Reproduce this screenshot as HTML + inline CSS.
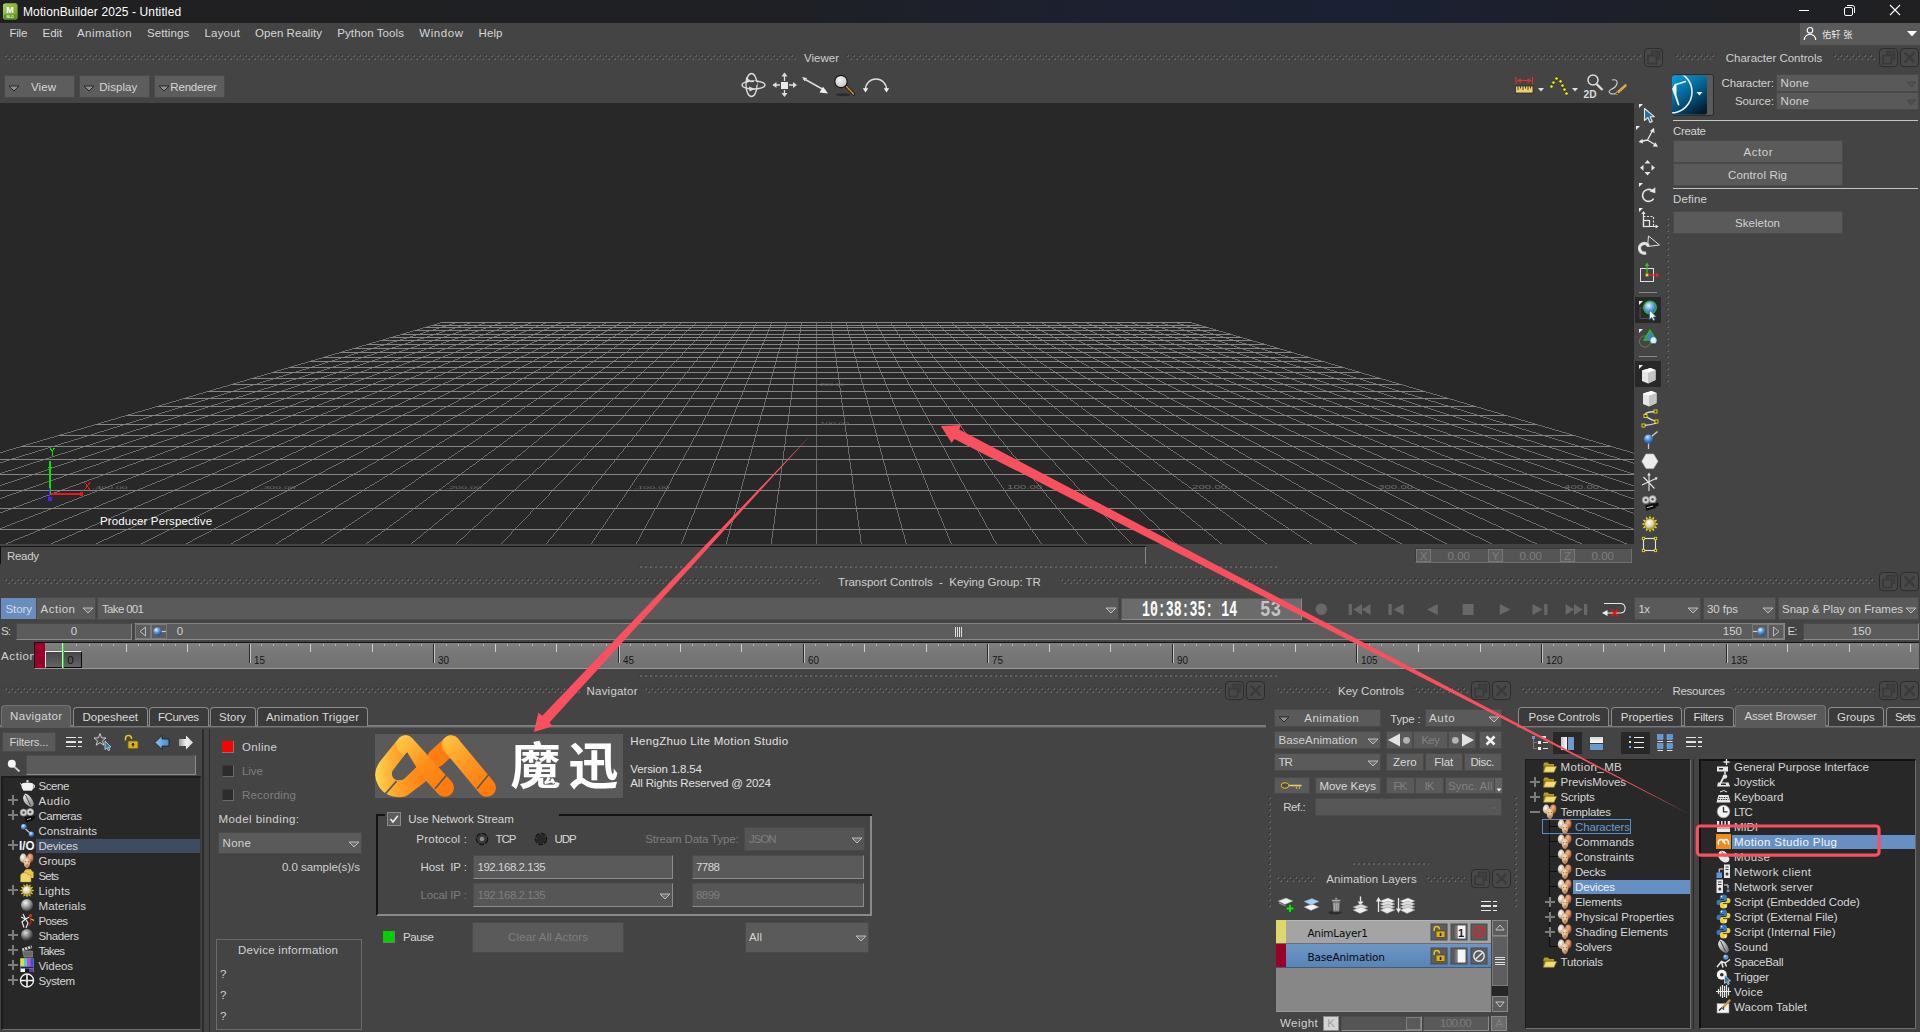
<!DOCTYPE html>
<html lang="en"><head><meta charset="utf-8"><title>MotionBuilder 2025 - Untitled</title>
<style>
html,body{margin:0;padding:0;background:#444;}
body{width:1920px;height:1032px;position:relative;overflow:hidden;font-family:"Liberation Sans","Noto Sans CJK SC",sans-serif;font-size:12px;color:#d2d2d2;}
#app{position:absolute;left:0;top:0;width:1920px;height:1032px;overflow:hidden;background:#444444;}
#app div,#app svg{position:absolute;box-sizing:border-box;}
#app svg{overflow:visible;}
.t{white-space:pre;}
.grip{height:6px;background-image:
 linear-gradient(90deg,transparent 2px,#646464 2px,#646464 3px,transparent 3px),
 linear-gradient(90deg,transparent 1px,#646464 1px,#646464 3px,transparent 3px),
 linear-gradient(90deg,#3a3a3a 2px,transparent 2px),
 linear-gradient(90deg,transparent 2px,#646464 2px,#646464 3px,transparent 3px),
 linear-gradient(90deg,transparent 1px,#646464 1px,#646464 3px,transparent 3px),
 linear-gradient(90deg,#3a3a3a 2px,transparent 2px);
 background-size:6px 1px,6px 1px,6px 2px,6px 1px,6px 1px,6px 2px;background-repeat:repeat-x;
 background-position:0 1px,0 2px,0 0,3px 4px,3px 5px,3px 3px;}
.vgrip{width:3px;background-image:
 linear-gradient(180deg,transparent 2px,#646464 2px,#646464 3px,transparent 3px),
 linear-gradient(180deg,transparent 1px,#646464 1px,#646464 3px,transparent 3px),
 linear-gradient(180deg,#3a3a3a 2px,transparent 2px);
 background-size:1px 6px,1px 6px,2px 6px;background-repeat:repeat-y;background-position:1px 0,2px 0,0 0;}
</style></head>
<body><div id="app">
<svg width="0" height="0" style="left:0;top:0;"><defs><radialGradient id="fcL" cx="0.4" cy="0.35" r="0.75"><stop offset="0" stop-color="#fffaf2"/><stop offset="0.55" stop-color="#d0c0b0"/><stop offset="1" stop-color="#7a6a5c"/></radialGradient><radialGradient id="fcR" cx="0.45" cy="0.35" r="0.75"><stop offset="0" stop-color="#f4b898"/><stop offset="0.55" stop-color="#c87850"/><stop offset="1" stop-color="#6a3420"/></radialGradient><radialGradient id="fcF" cx="0.42" cy="0.32" r="0.8"><stop offset="0" stop-color="#fbe6c8"/><stop offset="0.55" stop-color="#d8a878"/><stop offset="1" stop-color="#7a4c2c"/></radialGradient></defs></svg>
<div style="left:0px;top:0px;width:1920px;height:23px;background:linear-gradient(90deg,#202021 0%,#1f2024 38%,#1c2030 58%,#1b2032 72%,#1e2026 90%,#202022 100%);"></div>
<svg style="left:3px;top:3px;" width="15" height="17" viewBox="0 0 15 17"><defs><linearGradient id="gi" x1="0" y1="0" x2="1" y2="1"><stop offset="0" stop-color="#a9cf5a"/><stop offset="1" stop-color="#6f9a2e"/></linearGradient></defs><path d="M1 2 L3 0 L13 0 L15 2 L15 15 L13 17 L1 17 Z" fill="#4f7a25"/><rect x="0" y="0.5" width="14" height="15.5" rx="1.5" fill="url(#gi)"/><rect x="1" y="11.5" width="13" height="4.5" fill="#5f8f2a"/><text x="7" y="9.6" font-size="9" font-weight="bold" fill="#fff" text-anchor="middle" font-family="Liberation Sans,sans-serif">M</text><text x="7.2" y="15.3" font-size="3.6" font-weight="bold" fill="#e4f0c8" text-anchor="middle" font-family="Liberation Sans,sans-serif">BLD</text></svg>
<div class="t" style="top:2.00px;height:20px;line-height:20px;font-size:12px;color:#ffffff;left:23px;letter-spacing:0.12px;">MotionBuilder 2025 - Untitled</div>
<svg style="left:1790px;top:0px;" width="130" height="23" viewBox="0 0 130 23"><path d="M9 10.5 H19" stroke="#fff" stroke-width="1"/><rect x="54.5" y="7.5" width="8" height="8" rx="1.5" fill="none" stroke="#fff" stroke-width="1"/><path d="M57 5.5 H62.5 Q64.5 5.5 64.5 7.5 V13" fill="none" stroke="#fff" stroke-width="1"/><path d="M100 5 L110 15 M110 5 L100 15" stroke="#fff" stroke-width="1.1"/></svg>
<div style="left:0px;top:23px;width:1920px;height:22px;background:#444444;"></div>
<div class="t" style="top:23.00px;height:20px;line-height:20px;font-size:11.5px;color:#d6d6d6;left:9.5px;letter-spacing:-0.24px;">File</div>
<div class="t" style="top:23.00px;height:20px;line-height:20px;font-size:11.5px;color:#d6d6d6;left:42.6px;letter-spacing:-0.11px;">Edit</div>
<div class="t" style="top:23.00px;height:20px;line-height:20px;font-size:11.5px;color:#d6d6d6;left:77px;letter-spacing:0.45px;">Animation</div>
<div class="t" style="top:23.00px;height:20px;line-height:20px;font-size:11.5px;color:#d6d6d6;left:147px;letter-spacing:0.10px;">Settings</div>
<div class="t" style="top:23.00px;height:20px;line-height:20px;font-size:11.5px;color:#d6d6d6;left:204.5px;letter-spacing:0.19px;">Layout</div>
<div class="t" style="top:23.00px;height:20px;line-height:20px;font-size:11.5px;color:#d6d6d6;left:255px;letter-spacing:0.05px;">Open Reality</div>
<div class="t" style="top:23.00px;height:20px;line-height:20px;font-size:11.5px;color:#d6d6d6;left:337.25px;letter-spacing:0.10px;">Python Tools</div>
<div class="t" style="top:23.00px;height:20px;line-height:20px;font-size:11.5px;color:#d6d6d6;left:419.25px;letter-spacing:0.57px;">Window</div>
<div class="t" style="top:23.00px;height:20px;line-height:20px;font-size:11.5px;color:#d6d6d6;left:478.5px;letter-spacing:0.11px;">Help</div>
<div style="left:1800px;top:23px;width:120px;height:22px;background:#5a5a5a;"></div>
<svg style="left:1803px;top:26px;" width="14" height="16" viewBox="0 0 14 16"><circle cx="7" cy="4.3" r="2.8" fill="none" stroke="#fff" stroke-width="1.1"/><path d="M1.3 14 A5.7 5.7 0 0 1 12.7 14" fill="none" stroke="#fff" stroke-width="1.1"/></svg>
<div class="t" style="top:25.00px;height:20px;line-height:20px;font-size:9.3px;color:#e8e8e8;left:1822px;font-family:'Liberation Sans','Noto Sans CJK SC',sans-serif;">佑轩 张</div>
<svg style="left:1907px;top:31px;" width="10" height="6" viewBox="0 0 10 6"><path d="M0 0 H10 L5 5.5 Z" fill="#fff"/></svg>
<div class="grip" style="left:4px;top:54px;width:792px;"></div>
<div class="t" style="top:48.00px;height:20px;line-height:20px;font-size:11.5px;color:#d0d0d0;left:521.50px;width:600px;text-align:center;">Viewer</div>
<div class="grip" style="left:846px;top:54px;width:795px;"></div>
<svg style="left:1644px;top:47.5px;" width="19" height="19" viewBox="0 0 19 19"><rect x="0.5" y="0.5" width="18" height="18.2" rx="3.5" fill="#484848" stroke="#2c2c2c"/><rect x="8" y="3.5" width="7.5" height="7.5" fill="#404040" stroke="#3a3a3a" stroke-width="1.6"/><rect x="4" y="7.5" width="8.5" height="8" fill="#484848" stroke="#3a3a3a" stroke-width="2"/></svg>
<div class="grip" style="left:1675px;top:54px;width:40px;"></div>
<div class="t" style="top:48.00px;height:20px;line-height:20px;font-size:11.5px;color:#d0d0d0;left:1474.00px;width:600px;text-align:center;">Character Controls</div>
<div class="grip" style="left:1833px;top:54px;width:42px;"></div>
<svg style="left:1879px;top:47.5px;" width="19" height="19" viewBox="0 0 19 19"><rect x="0.5" y="0.5" width="18" height="18.2" rx="3.5" fill="#484848" stroke="#2c2c2c"/><rect x="8" y="3.5" width="7.5" height="7.5" fill="#404040" stroke="#3a3a3a" stroke-width="1.6"/><rect x="4" y="7.5" width="8.5" height="8" fill="#484848" stroke="#3a3a3a" stroke-width="2"/></svg>
<svg style="left:1900px;top:47.5px;" width="19" height="19" viewBox="0 0 19 19"><rect x="0.5" y="0.5" width="18" height="18.2" rx="3.5" fill="#484848" stroke="#2c2c2c"/><path d="M4.5 4.5 L14.5 14.5 M14.5 4.5 L4.5 14.5" stroke="#3a3a3a" stroke-width="2.4" fill="none"/></svg>
<div style="left:5px;top:76px;width:69px;height:21px;background:#5d5d5d;box-shadow:0 0 0 1px #4a4a4a;"></div>
<svg style="left:7.5px;top:84.5px;" width="12" height="7" viewBox="0 0 12 7"><path d="M1 1 L11 1 L6.0 6 Z" fill="#8e8e8e" stroke="#1e1e1e" stroke-width="0.9" stroke-linejoin="miter"/></svg>
<div class="t" style="top:77.00px;height:20px;line-height:20px;font-size:11.5px;color:#d6d6d6;left:-256.45px;width:600px;text-align:center;letter-spacing:0.09px;">View</div>
<div style="left:80px;top:76px;width:69px;height:21px;background:#5d5d5d;box-shadow:0 0 0 1px #4a4a4a;"></div>
<svg style="left:82.5px;top:84.5px;" width="12" height="7" viewBox="0 0 12 7"><path d="M1 1 L11 1 L6.0 6 Z" fill="#8e8e8e" stroke="#1e1e1e" stroke-width="0.9" stroke-linejoin="miter"/></svg>
<div class="t" style="top:77.00px;height:20px;line-height:20px;font-size:11.5px;color:#d6d6d6;left:-181.78px;width:600px;text-align:center;letter-spacing:0.05px;">Display</div>
<div style="left:155px;top:76px;width:69px;height:21px;background:#5d5d5d;box-shadow:0 0 0 1px #4a4a4a;"></div>
<svg style="left:157.5px;top:84.5px;" width="12" height="7" viewBox="0 0 12 7"><path d="M1 1 L11 1 L6.0 6 Z" fill="#8e8e8e" stroke="#1e1e1e" stroke-width="0.9" stroke-linejoin="miter"/></svg>
<div class="t" style="top:77.00px;height:20px;line-height:20px;font-size:11.5px;color:#d6d6d6;left:-106.50px;width:600px;text-align:center;letter-spacing:-0.21px;">Renderer</div>
<svg style="left:741px;top:72px;" width="26" height="26" viewBox="0 0 26 26"><ellipse cx="12.5" cy="13" rx="11.5" ry="4" fill="none" stroke="#dcdcdc" stroke-width="1.3"/><ellipse cx="10.5" cy="13" rx="5.5" ry="11.5" fill="none" stroke="#dcdcdc" stroke-width="1.3"/><path d="M4.5 11.5 L5 5 L9.5 8.5 Z" fill="#dcdcdc"/><path d="M8 14.5 L14 17 L8.5 19.5 Z" fill="#dcdcdc"/><path d="M9 9.5 H14" stroke="#dcdcdc" stroke-width="1.2"/><path d="M13 9.5 A4 3 0 0 1 15 13" stroke="#444" stroke-width="2" fill="none"/></svg>
<svg style="left:772px;top:72px;" width="26" height="26" viewBox="0 0 26 26"><path d="M12.5 1 V24 M1 13 H24" stroke="#dcdcdc" stroke-width="1.3"/><path d="M12.5 0.5 L15.5 4.5 H9.5 Z M12.5 25 L15.5 21 H9.5 Z M0.5 13 L4.5 10 V16 Z M25 13 L21 10 V16 Z" fill="#dcdcdc"/><rect x="8.5" y="9.5" width="8" height="8" fill="#e8e8e8" stroke="#444" stroke-width="1"/></svg>
<svg style="left:801px;top:75px;" width="28" height="20" viewBox="0 0 28 20"><path d="M2.5 3.5 L24 15.5" stroke="#dcdcdc" stroke-width="1.5"/><path d="M1 2 L6 3 L3.8 6.5 Z" fill="#dcdcdc"/><path d="M27 18.5 L18.5 17.5 L22 11.8 Z" fill="#f0f0f0"/></svg>
<svg style="left:832px;top:73px;" width="24" height="26" viewBox="0 0 24 26"><defs><radialGradient id="mg" cx="0.4" cy="0.35" r="0.7"><stop offset="0" stop-color="#f2f2f2"/><stop offset="1" stop-color="#c4c4c4"/></radialGradient></defs><ellipse cx="11" cy="21.8" rx="7.5" ry="1.5" fill="#2a2a2a"/><path d="M14 13 L21.5 21" stroke="#1c1c1c" stroke-width="3.2" stroke-linecap="round"/><path d="M14.5 13.5 L21.5 21" stroke="#d8893c" stroke-width="1.6" stroke-linecap="round"/><circle cx="9" cy="8.5" r="6.2" fill="url(#mg)" stroke="#181818" stroke-width="1.2"/></svg>
<svg style="left:861px;top:76px;" width="28" height="20" viewBox="0 0 28 20"><path d="M4.5 13.5 A10.5 10.5 0 0 1 25.5 13.5" fill="none" stroke="#dcdcdc" stroke-width="1.4"/><path d="M1.8 12.3 H7.2 L4.5 16.5 Z M22.8 12.3 H28.2 L25.5 16.5 Z" fill="#f0f0f0"/></svg>
<svg style="left:1515px;top:76px;" width="19" height="18" viewBox="0 0 19 18"><path d="M1 1 V8 M17.5 1 V8" stroke="#e03030" stroke-width="1.2"/><path d="M2.5 4.5 H16" stroke="#e03030" stroke-width="1.2"/><path d="M1.8 4.5 L6 2.2 V6.8 Z M16.7 4.5 L12.5 2.2 V6.8 Z" fill="#e03030"/><rect x="0.5" y="10" width="17.5" height="7" fill="#e8d070" stroke="#2a2a2a" stroke-width="0.8"/><path d="M3 10 V14 M5.5 10 V12.5 M8 10 V14 M10.5 10 V12.5 M13 10 V14 M15.5 10 V12.5" stroke="#3a3010" stroke-width="0.9"/></svg>
<svg style="left:1538px;top:88px;" width="6" height="4" viewBox="0 0 6 4"><path d="M0 0 H6 L3 3.5 Z" fill="#e0e0e0"/></svg>
<svg style="left:1548px;top:75px;" width="22" height="22" viewBox="0 0 22 22"><circle cx="3.5" cy="11.5" r="1.6" fill="#f6f000" stroke="#2a2a2a" stroke-width="0.5"/><circle cx="5.5" cy="7.5" r="1.6" fill="#f6f000" stroke="#2a2a2a" stroke-width="0.5"/><circle cx="8.5" cy="3.5" r="1.6" fill="#f6f000" stroke="#2a2a2a" stroke-width="0.5"/><circle cx="12.5" cy="6.3" r="1.6" fill="#f6f000" stroke="#2a2a2a" stroke-width="0.5"/><circle cx="14.5" cy="10.5" r="1.6" fill="#f6f000" stroke="#2a2a2a" stroke-width="0.5"/><circle cx="16.5" cy="14.5" r="1.6" fill="#f6f000" stroke="#2a2a2a" stroke-width="0.5"/><circle cx="18.5" cy="18.5" r="1.6" fill="#f6f000" stroke="#2a2a2a" stroke-width="0.5"/></svg>
<svg style="left:1572px;top:88px;" width="6" height="4" viewBox="0 0 6 4"><path d="M0 0 H6 L3 3.5 Z" fill="#e0e0e0"/></svg>
<svg style="left:1582px;top:72px;" width="24" height="28" viewBox="0 0 24 28"><circle cx="11" cy="8" r="5" fill="none" stroke="#dcdcdc" stroke-width="1.5"/><path d="M14.5 12 L20.5 18" stroke="#dcdcdc" stroke-width="2.4"/><text x="1.5" y="25.6" font-size="11" font-weight="bold" fill="#dcdcdc" font-family="Liberation Sans,sans-serif" textLength="13" lengthAdjust="spacingAndGlyphs">2D</text></svg>
<svg style="left:1607px;top:78px;" width="22" height="18" viewBox="0 0 22 18"><path d="M5 2 Q11 1 10 5.5 Q9 9.5 4 11.5 Q0.5 13.5 3.5 15.5 Q6 16.5 9 15.5" fill="none" stroke="#d0d0d0" stroke-width="1.1"/><path d="M9.5 15.5 L18.5 7.5" stroke="#d9a64e" stroke-width="2.6" stroke-linecap="round"/><path d="M8.5 16.5 L10.5 14.2 L11.5 15.5 Z" fill="#1a1a1a"/></svg>
<div style="left:0px;top:103px;width:1634px;height:441px;background:#282828;overflow:hidden;"><svg width="1634" height="441" viewBox="0 0 1634 441" style="left:0;top:0;overflow:hidden;" shape-rendering="crispEdges"><path d="M442.05 219.50L-329.86 447.00M457.02 219.50L-284.02 447.00M471.99 219.50L-238.17 447.00M486.96 219.50L-192.32 447.00M501.93 219.50L-146.48 447.00M516.90 219.50L-100.63 447.00M531.87 219.50L-54.78 447.00M546.84 219.50L-8.94 447.00M561.81 219.50L36.91 447.00M576.78 219.50L82.76 447.00M591.75 219.50L128.60 447.00M606.72 219.50L174.45 447.00M621.69 219.50L220.30 447.00M636.66 219.50L266.14 447.00M651.63 219.50L311.99 447.00M666.60 219.50L357.84 447.00M681.57 219.50L403.68 447.00M696.54 219.50L449.53 447.00M711.51 219.50L495.37 447.00M726.48 219.50L541.22 447.00M741.45 219.50L587.07 447.00M756.42 219.50L632.91 447.00M771.39 219.50L678.76 447.00M786.36 219.50L724.61 447.00M801.33 219.50L770.45 447.00M831.27 219.50L862.15 447.00M846.24 219.50L907.99 447.00M861.21 219.50L953.84 447.00M876.18 219.50L999.69 447.00M891.15 219.50L1045.53 447.00M906.12 219.50L1091.38 447.00M921.09 219.50L1137.23 447.00M936.06 219.50L1183.07 447.00M951.03 219.50L1228.92 447.00M966.00 219.50L1274.76 447.00M980.97 219.50L1320.61 447.00M995.94 219.50L1366.46 447.00M1010.91 219.50L1412.30 447.00M1025.88 219.50L1458.15 447.00M1040.85 219.50L1504.00 447.00M1055.82 219.50L1549.84 447.00M1070.79 219.50L1595.69 447.00M1085.76 219.50L1641.54 447.00M1100.73 219.50L1687.38 447.00M1115.70 219.50L1733.23 447.00M1130.67 219.50L1779.08 447.00M1145.64 219.50L1824.92 447.00M1160.61 219.50L1870.77 447.00M1175.58 219.50L1916.62 447.00M1190.55 219.50L1962.46 447.00" fill="none" stroke="#868686" stroke-width="0.72"/><path d="M816.30 219.50L816.30 447.00" fill="none" stroke="#6c6c6c" stroke-width="0.9"/><path d="M442.0 219.5H1190.5M431.9 222.5H1200.7M425.1 224.5H1207.5M414.9 227.5H1217.7M401.3 231.5H1231.3M391.2 234.5H1241.4M381.0 237.5H1251.6M367.4 241.5H1265.2M353.8 245.5H1278.8M340.3 249.5H1292.3M323.3 254.5H1309.3M309.7 258.5H1322.9M289.4 264.5H1343.2M272.4 269.5H1360.2M252.0 275.5H1380.6M231.7 281.5H1400.9M207.9 288.5H1424.7M184.2 295.5H1448.4M157.0 303.5H1475.6M126.5 312.5H1506.1M96.0 321.5H1536.6M58.6 332.5H1574.0M21.3 343.5H1611.3M0.0 356.5H1634.0M0.0 371.5H1634.0M0.0 387.5H1634.0M0.0 405.5H1634.0M0.0 426.5H1634.0" fill="none" stroke="#868686" stroke-width="1"/></svg></div>
<div class="t" style="left:92px;top:477px;height:20px;line-height:20px;font-size:10.5px;color:#6e6e6e;transform:scaleY(0.4);transform-origin:0 50%;">-400.00</div>
<div class="t" style="left:260px;top:477px;height:20px;line-height:20px;font-size:10.5px;color:#6e6e6e;transform:scaleY(0.4);transform-origin:0 50%;">-300.00</div>
<div class="t" style="left:446px;top:477px;height:20px;line-height:20px;font-size:10.5px;color:#6e6e6e;transform:scaleY(0.4);transform-origin:0 50%;">-200.00</div>
<div class="t" style="left:634px;top:477px;height:20px;line-height:20px;font-size:10.5px;color:#6e6e6e;transform:scaleY(0.4);transform-origin:0 50%;">-100.00</div>
<div class="t" style="left:1007px;top:477px;height:20px;line-height:20px;font-size:11.5px;color:#6e6e6e;transform:scaleY(0.4);transform-origin:0 50%;">100.00</div>
<div class="t" style="left:1192px;top:477px;height:20px;line-height:20px;font-size:11.5px;color:#6e6e6e;transform:scaleY(0.4);transform-origin:0 50%;">200.00</div>
<div class="t" style="left:1378px;top:477px;height:20px;line-height:20px;font-size:11.5px;color:#6e6e6e;transform:scaleY(0.4);transform-origin:0 50%;">300.00</div>
<div class="t" style="left:1564px;top:477px;height:20px;line-height:20px;font-size:11.5px;color:#6e6e6e;transform:scaleY(0.4);transform-origin:0 50%;">400.00</div>
<div class="t" style="left:820px;top:413.5px;height:20px;line-height:20px;font-size:9.5px;color:#6e6e6e;transform:scaleY(0.35);transform-origin:0 50%;">100.00</div>
<div class="t" style="left:820px;top:374.5px;height:20px;line-height:20px;font-size:8px;color:#6e6e6e;transform:scaleY(0.35);transform-origin:0 50%;">200.00</div>
<div class="t" style="left:820px;top:347px;height:20px;line-height:20px;font-size:6.6px;color:#6e6e6e;transform:scaleY(0.35);transform-origin:0 50%;">300.00</div>
<div class="t" style="left:820px;top:327px;height:20px;line-height:20px;font-size:5.8px;color:#6e6e6e;transform:scaleY(0.35);transform-origin:0 50%;">400.00</div>
<div class="t" style="left:820px;top:312px;height:20px;line-height:20px;font-size:5px;color:#6e6e6e;transform:scaleY(0.35);transform-origin:0 50%;">500.00</div>
<svg style="left:40px;top:440px;shape-rendering:crispEdges;" width="60" height="66" viewBox="0 0 60 66"><path d="M10 21 V54" stroke="#00e400" stroke-width="2"/><path d="M8 27 H12" stroke="#00e400" stroke-width="1"/><path d="M10.5 54 H42" stroke="#f01414" stroke-width="2"/><rect x="40" y="52" width="3" height="4" fill="#f01414"/><path d="M9.5 48 V57" stroke="#4a20ff" stroke-width="1.6"/><rect x="8" y="57" width="4" height="4" fill="#4a20ff"/><path d="M10 8 L12.2 11 L14.5 8 M12.2 11 V16" stroke="#00e400" stroke-width="1" fill="none"/><path d="M44.5 42 L50 50 M50 42 L44.5 50" stroke="#f01414" stroke-width="1" fill="none"/></svg>
<div class="t" style="top:511.00px;height:20px;line-height:20px;font-size:11.5px;color:#ffffff;left:100px;letter-spacing:0.11px;">Producer Perspective</div>
<div style="left:0px;top:546px;width:1146px;height:1px;background:#161616;"></div>
<div style="left:0px;top:547px;width:1146px;height:17px;background:#444444;border-left:1px solid #111;border-right:1px solid #8a8a8a;"></div>
<div class="t" style="top:546.00px;height:20px;line-height:20px;font-size:11.5px;color:#d0d0d0;left:7px;letter-spacing:-0.31px;">Ready</div>
<div style="left:1415px;top:548px;width:217px;height:15px;background:#555555;border:1px solid #6e6e6e;border-top-color:#3a3a3a;border-left-color:#3a3a3a;"></div>
<div style="left:1416px;top:549px;width:15px;height:13px;background:#5e5e5e;border:1px solid #777;"></div>
<div class="t" style="top:546.00px;height:20px;line-height:20px;font-size:11.5px;color:#7e7e7e;left:1123.50px;width:600px;text-align:center;">X</div>
<div class="t" style="top:546.00px;height:20px;line-height:20px;font-size:11.5px;color:#7e7e7e;left:870.00px;width:600px;text-align:right;">0.00</div>
<div style="left:1488px;top:549px;width:15px;height:13px;background:#5e5e5e;border:1px solid #777;"></div>
<div class="t" style="top:546.00px;height:20px;line-height:20px;font-size:11.5px;color:#7e7e7e;left:1195.50px;width:600px;text-align:center;">Y</div>
<div class="t" style="top:546.00px;height:20px;line-height:20px;font-size:11.5px;color:#7e7e7e;left:942.00px;width:600px;text-align:right;">0.00</div>
<div style="left:1560px;top:549px;width:15px;height:13px;background:#5e5e5e;border:1px solid #777;"></div>
<div class="t" style="top:546.00px;height:20px;line-height:20px;font-size:11.5px;color:#7e7e7e;left:1267.50px;width:600px;text-align:center;">Z</div>
<div class="t" style="top:546.00px;height:20px;line-height:20px;font-size:11.5px;color:#7e7e7e;left:1014.00px;width:600px;text-align:right;">0.00</div>
<svg style="left:1639px;top:104px;" width="4" height="4" viewBox="0 0 4 4"><path d="M0 0 H4 L0 4 Z" fill="#f0f0f0"/></svg>
<svg style="left:1643px;top:107px;" width="13" height="17" viewBox="0 0 13 17"><path d="M1.5 1.5 L1.5 13.5 L4.8 10.6 L7 15.5 L9.3 14.4 L7.2 9.8 L11.3 9.6 Z" fill="#2a6f9c" stroke="#e8e8e8" stroke-width="1.1" stroke-linejoin="round"/></svg>
<svg style="left:1636px;top:126px;" width="4" height="4" viewBox="0 0 4 4"><path d="M0 0 H4 L0 4 Z" fill="#f0f0f0"/></svg>
<svg style="left:1638px;top:127px;" width="21" height="22" viewBox="0 0 21 22"><path d="M9.5 13 L14.5 3.5 M9.5 13 L2.5 14.5 M9.5 13 L17.5 18" stroke="#e6e6e6" stroke-width="1.3" fill="none"/><path d="M16 0.8 L16.5 6 L12 4 Z M0.5 15 L4.5 11.8 L5 16.5 Z M20 19.8 L14.8 19.5 L17.5 15.3 Z" fill="#e6e6e6"/></svg>
<svg style="left:1639px;top:159px;" width="18" height="18" viewBox="0 0 18 18"><path d="M8.5 1 L11.5 4.5 H5.5 Z M8.5 16.5 L11.5 13 H5.5 Z M1 8.7 L4.5 5.7 V11.7 Z M16 8.7 L12.5 5.7 V11.7 Z" fill="#e6e6e6"/></svg>
<svg style="left:1639px;top:183px;" width="4" height="4" viewBox="0 0 4 4"><path d="M0 0 H4 L0 4 Z" fill="#f0f0f0"/></svg>
<svg style="left:1639px;top:185px;" width="19" height="19" viewBox="0 0 19 19"><path d="M13.2 5.6 A6 6 0 1 0 14.6 13.6" fill="none" stroke="#e6e6e6" stroke-width="1.6"/><path d="M16.3 2.2 L16.3 8.2 L10.6 6.6 Z" fill="#e6e6e6"/></svg>
<svg style="left:1639px;top:208px;" width="4" height="4" viewBox="0 0 4 4"><path d="M0 0 H4 L0 4 Z" fill="#f0f0f0"/></svg>
<svg style="left:1640px;top:211px;" width="19" height="19" viewBox="0 0 19 19"><path d="M3.5 2 V15.5 H17" stroke="#e6e6e6" stroke-width="1.2" fill="none"/><path d="M3.5 0 L5.6 3 H1.4 Z M18.6 15.5 L15.6 13.4 V17.6 Z" fill="#e6e6e6"/><rect x="3.5" y="9.5" width="6" height="6" fill="none" stroke="#e6e6e6" stroke-width="1.2"/><path d="M3.5 5.5 H13.5 V15.5" stroke="#e6e6e6" stroke-width="1.1" fill="none" stroke-dasharray="2 1.5"/></svg>
<svg style="left:1637px;top:235px;" width="24" height="22" viewBox="0 0 24 22"><path d="M11.5 1 L22.5 10 L10.5 11.5 Z" fill="none" stroke="#e0e0e0" stroke-width="1"/><path d="M11.5 11 A4.8 4.8 0 1 0 9 17.8" fill="none" stroke="#cfcfcf" stroke-width="3.4"/><path d="M11.5 11 A4.8 4.8 0 1 0 9 17.8" fill="none" stroke="#f2f2f2" stroke-width="1.2"/></svg>
<svg style="left:1639px;top:262px;" width="22" height="22" viewBox="0 0 22 22"><rect x="1.5" y="6.5" width="13" height="13" fill="none" stroke="#e0e0e0" stroke-width="1"/><path d="M8 13 V3" stroke="#2ec42e" stroke-width="1.3"/><path d="M8 0.5 L10.2 4 H5.8 Z" fill="#2ec42e"/><path d="M8 13 H17.5" stroke="#e02828" stroke-width="1.3"/><path d="M20.5 13 L17 10.8 V15.2 Z" fill="#e02828"/><rect x="6.5" y="11.5" width="3" height="3" fill="#f0e020" stroke="#806000" stroke-width="0.6"/></svg>
<div style="left:1639px;top:292px;width:18px;height:1px;background:#8a8a8a;"></div>
<div style="left:1635px;top:297px;width:26px;height:26px;background:#282828;"></div>
<svg style="left:1639px;top:301px;" width="4" height="4" viewBox="0 0 4 4"><path d="M0 0 H4 L0 4 Z" fill="#f0f0f0"/></svg>
<svg style="left:1638px;top:299px;" width="22" height="23" viewBox="0 0 22 23"><defs><radialGradient id="gl" cx="0.4" cy="0.35" r="0.7"><stop offset="0" stop-color="#e8f4ff"/><stop offset="0.5" stop-color="#6aa0e0"/><stop offset="1" stop-color="#2a58a8"/></radialGradient></defs><rect x="2" y="9" width="11" height="10.5" fill="#2a2a2a" stroke="#5a5a5a" stroke-width="0.8"/><circle cx="12" cy="8.5" r="6.3" fill="url(#gl)" stroke="#20c030" stroke-width="1.2"/><path d="M11.5 11 L11.5 20.5 L13.8 18.6 L15.3 21.6 L16.8 20.9 L15.4 18 L18.2 17.8 Z" fill="#f4f4f4" stroke="#2a6f9c" stroke-width="0.7"/></svg>
<svg style="left:1639px;top:329px;" width="4" height="4" viewBox="0 0 4 4"><path d="M0 0 H4 L0 4 Z" fill="#f0f0f0"/></svg>
<svg style="left:1638px;top:329px;" width="22" height="21" viewBox="0 0 22 21"><circle cx="7" cy="12.5" r="5.6" fill="none" stroke="#6a6a6a" stroke-width="1.1"/><path d="M12 1 L18 11 H6 Z" fill="#4f78c0" stroke="#18c818" stroke-width="1.3"/><ellipse cx="15.5" cy="11.5" rx="2.8" ry="3.2" fill="#d8f0ff" stroke="#9ad0f0" stroke-width="0.6"/><rect x="14.3" y="14.3" width="2.4" height="2.5" fill="#404040"/></svg>
<div style="left:1639px;top:356px;width:18px;height:1px;background:#8a8a8a;"></div>
<div style="left:1635px;top:361px;width:26px;height:26px;background:#282828;"></div>
<svg style="left:1639px;top:365px;" width="4" height="4" viewBox="0 0 4 4"><path d="M0 0 H4 L0 4 Z" fill="#f0f0f0"/></svg>
<svg style="left:1640px;top:367px;" width="17" height="18" viewBox="0 0 17 18"><path d="M2 3.5 L10.5 1 L15.5 3 L15.5 13 L8 16.5 L2 14 Z" fill="#e6e6e6"/><path d="M2 3.5 L10.5 1 L15.5 3 L8 5.8 Z" fill="#ffffff"/><path d="M8 5.8 L15.5 3 L15.5 13 L8 16.5 Z" fill="#c4c4c4"/></svg>
<svg style="left:1641px;top:390px;" width="17" height="18" viewBox="0 0 17 18"><path d="M2 3.5 L10.5 1 L15.5 3 L15.5 13 L8 16.5 L2 14 Z" fill="#e6e6e6"/><path d="M2 3.5 L10.5 1 L15.5 3 L8 5.8 Z" fill="#ffffff"/><path d="M8 5.8 L15.5 3 L15.5 13 L8 16.5 Z" fill="#c4c4c4"/></svg>
<svg style="left:1640px;top:409px;" width="20" height="20" viewBox="0 0 20 20"><path d="M15.5 2.5 Q3 3 5.5 7 Q8 9.5 16.5 12.5 Q18 15 3.5 16.5" fill="none" stroke="#dcdcdc" stroke-width="1.3"/><rect x="14" y="1" width="3" height="3" fill="#3a3200" stroke="#f0e020" stroke-width="0.9"/><rect x="4" y="5.5" width="3" height="3" fill="#3a3200" stroke="#f0e020" stroke-width="0.9"/><rect x="15" y="11" width="3" height="3" fill="#3a3200" stroke="#f0e020" stroke-width="0.9"/><rect x="2" y="15" width="3" height="3" fill="#3a3200" stroke="#f0e020" stroke-width="0.9"/></svg>
<svg style="left:1641px;top:430px;" width="19" height="20" viewBox="0 0 19 20"><defs><radialGradient id="pn" cx="0.4" cy="0.3" r="0.7"><stop offset="0" stop-color="#cfe4ff"/><stop offset="0.5" stop-color="#4e8fd8"/><stop offset="1" stop-color="#1f4f98"/></radialGradient></defs><path d="M10 7 L16.5 1.5" stroke="#c8c8c8" stroke-width="1.5"/><path d="M7.5 13 V19" stroke="#c8c8c8" stroke-width="1.3"/><circle cx="7.5" cy="9" r="4.6" fill="url(#pn)"/></svg>
<svg style="left:1641px;top:453px;" width="18" height="17" viewBox="0 0 18 17"><path d="M5 1 H12.5 L17 8.3 L12.5 15.6 H5 L0.8 8.3 Z" fill="#ececec" stroke="#c0c0c0" stroke-width="0.6"/></svg>
<svg style="left:1641px;top:472px;" width="18" height="20" viewBox="0 0 18 20"><path d="M8 2 V19 M1 13 L15 6.5 M2.5 5 L13.5 16.5" stroke="#e6e6e6" stroke-width="1.1" fill="none"/><path d="M8 0.5 L9.8 3.5 H6.2 Z M16.8 5.6 L13.8 5.2 L15 8.4 Z" fill="#e6e6e6"/></svg>
<svg style="left:1641px;top:495px;" width="18" height="17" viewBox="0 0 18 17"><circle cx="4.8" cy="5" r="3.6" fill="#cfcfcf" stroke="#8a8a8a" stroke-width="0.8"/><circle cx="4.8" cy="5" r="1.3" fill="#555"/><circle cx="11.6" cy="4.2" r="3.6" fill="#d8d8d8" stroke="#8a8a8a" stroke-width="0.8"/><circle cx="11.6" cy="4.2" r="1.3" fill="#555"/><path d="M4 10.5 L13.5 8 L15 13 L5.5 15.8 Z" fill="#0e0e0e"/><path d="M13.5 9 L17.3 7.2 L17.5 11 L14.5 11.5 Z" fill="#0e0e0e"/><path d="M6 12.7 L12 11" stroke="#bdbdbd" stroke-width="1"/></svg>
<svg style="left:1640.5px;top:515px;" width="18" height="18" viewBox="0 0 18 18"><defs><radialGradient id="sn" cx="0.4" cy="0.35" r="0.7"><stop offset="0" stop-color="#ffffff"/><stop offset="0.6" stop-color="#d8d0a0"/><stop offset="1" stop-color="#8a8050"/></radialGradient></defs><path d="M9 0.6 L10.4 3.6 H7.6 Z" fill="#e8c820" transform="rotate(0 9 9)"/><path d="M9 0.6 L10.4 3.6 H7.6 Z" fill="#e8c820" transform="rotate(30 9 9)"/><path d="M9 0.6 L10.4 3.6 H7.6 Z" fill="#e8c820" transform="rotate(60 9 9)"/><path d="M9 0.6 L10.4 3.6 H7.6 Z" fill="#e8c820" transform="rotate(90 9 9)"/><path d="M9 0.6 L10.4 3.6 H7.6 Z" fill="#e8c820" transform="rotate(120 9 9)"/><path d="M9 0.6 L10.4 3.6 H7.6 Z" fill="#e8c820" transform="rotate(150 9 9)"/><path d="M9 0.6 L10.4 3.6 H7.6 Z" fill="#e8c820" transform="rotate(180 9 9)"/><path d="M9 0.6 L10.4 3.6 H7.6 Z" fill="#e8c820" transform="rotate(210 9 9)"/><path d="M9 0.6 L10.4 3.6 H7.6 Z" fill="#e8c820" transform="rotate(240 9 9)"/><path d="M9 0.6 L10.4 3.6 H7.6 Z" fill="#e8c820" transform="rotate(270 9 9)"/><path d="M9 0.6 L10.4 3.6 H7.6 Z" fill="#e8c820" transform="rotate(300 9 9)"/><path d="M9 0.6 L10.4 3.6 H7.6 Z" fill="#e8c820" transform="rotate(330 9 9)"/><circle cx="9" cy="9" r="5.2" fill="url(#sn)" stroke="#b09a18" stroke-width="0.7"/></svg>
<svg style="left:1641px;top:536px;" width="17" height="17" viewBox="0 0 17 17"><rect x="2.5" y="2.5" width="12" height="12" fill="none" stroke="#e4e4e4" stroke-width="1.1"/><rect x="1.3" y="1.3" width="2.4" height="2.4" fill="#3a3200" stroke="#f0e020" stroke-width="0.8"/><rect x="13.3" y="1.3" width="2.4" height="2.4" fill="#3a3200" stroke="#f0e020" stroke-width="0.8"/><rect x="1.3" y="13.3" width="2.4" height="2.4" fill="#3a3200" stroke="#f0e020" stroke-width="0.8"/><rect x="13.3" y="13.3" width="2.4" height="2.4" fill="#3a3200" stroke="#f0e020" stroke-width="0.8"/></svg>
<div class="vgrip" style="left:1666px;top:217px;height:170px;"></div>
<div style="left:1672px;top:74px;width:42px;height:42px;background:#5a5a5a;border:1px solid #2c2c2c;border-radius:3px;"></div>
<svg style="left:1672px;top:75px;" width="36" height="40" viewBox="0 0 36 40"><defs><linearGradient id="cb" x1="0.15" y1="0" x2="0.75" y2="1"><stop offset="0" stop-color="#0a98d8"/><stop offset="0.4" stop-color="#056a9c"/><stop offset="0.85" stop-color="#03304c"/><stop offset="1" stop-color="#021c2e"/></linearGradient><clipPath id="cbc"><rect x="0" y="0.5" width="35" height="39" rx="2"/></clipPath></defs><rect x="0" y="0.5" width="35" height="39" rx="2" fill="url(#cb)"/><g clip-path="url(#cbc)"><circle cx="-1" cy="17" r="21" fill="none" stroke="#e8eef2" stroke-width="1.6"/><path d="M13.5 6.5 L4 9.5" stroke="#f4f4f4" stroke-width="1.4" fill="none" stroke-linecap="round"/><path d="M3 8.5 L0 14 L3 22 L6 30.5 L7.5 30 L4.5 20 L4.5 10 Z" fill="#f4f4f4"/></g><path d="M24.5 17 H30.5 L27.5 20.5 Z" fill="#e8e8e8"/></svg>
<div class="t" style="top:73.00px;height:20px;line-height:20px;font-size:11.5px;color:#d2d2d2;left:1173.87px;width:600px;text-align:right;letter-spacing:-0.13px;">Character:</div>
<div class="t" style="top:91.00px;height:20px;line-height:20px;font-size:11.5px;color:#d2d2d2;left:1173.89px;width:600px;text-align:right;letter-spacing:-0.11px;">Source:</div>
<div style="left:1777px;top:75px;width:141px;height:16px;background:#595959;box-shadow:0 0 0 1px #484848;"></div>
<div class="t" style="top:73.00px;height:20px;line-height:20px;font-size:11.5px;color:#d2d2d2;left:1780.5px;letter-spacing:0.33px;">None</div>
<svg style="left:1905.5px;top:80.5px;" width="11" height="7" viewBox="0 0 11 7"><path d="M1 1 L10 1 L5.5 6 Z" fill="#505050" stroke="#454545" stroke-width="0.9" stroke-linejoin="miter"/></svg>
<div style="left:1777px;top:93px;width:141px;height:16px;background:#595959;box-shadow:0 0 0 1px #484848;"></div>
<div class="t" style="top:91.00px;height:20px;line-height:20px;font-size:11.5px;color:#d2d2d2;left:1780.5px;letter-spacing:0.33px;">None</div>
<svg style="left:1905.5px;top:98.5px;" width="11" height="7" viewBox="0 0 11 7"><path d="M1 1 L10 1 L5.5 6 Z" fill="#505050" stroke="#454545" stroke-width="0.9" stroke-linejoin="miter"/></svg>
<div style="left:1673px;top:120px;width:245px;height:1px;background:#c4c4c4;"></div>
<div class="t" style="top:121.00px;height:20px;line-height:20px;font-size:11.5px;color:#d2d2d2;left:1673px;letter-spacing:-0.31px;">Create</div>
<div style="left:1674px;top:141px;width:168px;height:21px;background:#5a5a5a;box-shadow:0 0 0 1px #4a4a4a;"></div>
<div class="t" style="top:142.00px;height:20px;line-height:20px;font-size:11.5px;color:#d2d2d2;left:1458.27px;width:600px;text-align:center;letter-spacing:0.54px;">Actor</div>
<div style="left:1674px;top:164px;width:168px;height:21px;background:#5a5a5a;box-shadow:0 0 0 1px #4a4a4a;"></div>
<div class="t" style="top:165.00px;height:20px;line-height:20px;font-size:11.5px;color:#d2d2d2;left:1457.57px;width:600px;text-align:center;letter-spacing:0.15px;">Control Rig</div>
<div style="left:1673px;top:188px;width:245px;height:1px;background:#c4c4c4;"></div>
<div class="t" style="top:189.00px;height:20px;line-height:20px;font-size:11.5px;color:#d2d2d2;left:1673px;letter-spacing:0.15px;">Define</div>
<div style="left:1674px;top:212px;width:168px;height:21px;background:#5a5a5a;box-shadow:0 0 0 1px #4a4a4a;"></div>
<div class="t" style="top:213.00px;height:20px;line-height:20px;font-size:11.5px;color:#d2d2d2;left:1457.52px;width:600px;text-align:center;letter-spacing:0.03px;">Skeleton</div>
<div class="grip" style="left:4px;top:578px;width:816px;"></div>
<div class="t" style="top:572.00px;height:20px;line-height:20px;font-size:11.5px;color:#d0d0d0;left:639.50px;width:600px;text-align:center;letter-spacing:-0.01px;">Transport Controls  -  Keying Group: TR</div>
<div class="grip" style="left:1060px;top:578px;width:815px;"></div>
<svg style="left:1879px;top:571.5px;" width="19" height="19" viewBox="0 0 19 19"><rect x="0.5" y="0.5" width="18" height="18.2" rx="3.5" fill="#484848" stroke="#2c2c2c"/><rect x="8" y="3.5" width="7.5" height="7.5" fill="#404040" stroke="#3a3a3a" stroke-width="1.6"/><rect x="4" y="7.5" width="8.5" height="8" fill="#484848" stroke="#3a3a3a" stroke-width="2"/></svg>
<svg style="left:1900px;top:571.5px;" width="19" height="19" viewBox="0 0 19 19"><rect x="0.5" y="0.5" width="18" height="18.2" rx="3.5" fill="#484848" stroke="#2c2c2c"/><path d="M4.5 4.5 L14.5 14.5 M14.5 4.5 L4.5 14.5" stroke="#3a3a3a" stroke-width="2.4" fill="none"/></svg>
<div style="left:1px;top:598px;width:35px;height:21px;background:#6a8dbd;"></div>
<div class="t" style="top:599.00px;height:20px;line-height:20px;font-size:11.5px;color:#d0dcec;left:5.5px;letter-spacing:-0.09px;">Story</div>
<div style="left:37px;top:598px;width:58px;height:21px;background:#5a5a5a;box-shadow:0 0 0 1px #4a4a4a;"></div>
<div class="t" style="top:599.00px;height:20px;line-height:20px;font-size:11.5px;color:#d2d2d2;left:40.5px;letter-spacing:0.51px;">Action</div>
<svg style="left:81.5px;top:606.5px;" width="12" height="7" viewBox="0 0 12 7"><path d="M1 1 L11 1 L6.0 6 Z" fill="#6e6e6e" stroke="#c6c6c6" stroke-width="0.9" stroke-linejoin="miter"/></svg>
<div style="left:98px;top:598px;width:1020px;height:21px;background:#5a5a5a;box-shadow:0 0 0 1px #4a4a4a;"></div>
<div class="t" style="top:599.00px;height:20px;line-height:20px;font-size:11.5px;color:#d2d2d2;left:102px;letter-spacing:-0.67px;">Take 001</div>
<svg style="left:1104.5px;top:606.5px;" width="12" height="7" viewBox="0 0 12 7"><path d="M1 1 L11 1 L6.0 6 Z" fill="#6e6e6e" stroke="#c6c6c6" stroke-width="0.9" stroke-linejoin="miter"/></svg>
<div style="left:1121px;top:598px;width:181px;height:22px;background:#6b6b6b;border-top:1px solid #555;border-left:1px solid #555;border-bottom:1px solid #8c8c8c;border-right:1px solid #8c8c8c;"></div>
<div class="t" style="left:1142px;top:600px;height:22px;line-height:22px;font-size:22px;font-weight:bold;font-family:'Liberation Mono','DejaVu Sans Mono',monospace;color:#ffffff;transform-origin:0 50%;transform:scaleX(0.6);letter-spacing:0px;">10:38:35: 14</div>
<div class="t" style="left:1260px;top:600px;height:22px;line-height:22px;font-size:22px;font-weight:bold;font-family:'Liberation Mono','DejaVu Sans Mono',monospace;color:#c4c4c4;transform-origin:0 50%;transform:scaleX(0.8);">53</div>
<svg style="left:1310px;top:598px;" width="320" height="22" viewBox="0 0 320 22"><circle cx="11.3" cy="11.2" r="5.8" fill="#686868"/><rect x="38.7" y="6" width="3.2" height="11" fill="#686868"/><path d="M52 6 V17 L43.5 11.5 Z M60.5 6 V17 L52 11.5 Z" fill="#686868"/><rect x="78.5" y="6" width="3.2" height="11" fill="#686868"/><path d="M93.6 6 V17 L83.5 11.5 Z" fill="#686868"/><path d="M127.8 6 V17 L117 11.5 Z" fill="#686868"/><rect x="152.6" y="6" width="11" height="11" fill="#686868"/><path d="M189.7 6 V17 L200.4 11.5 Z" fill="#686868"/><path d="M222.5 6 V17 L232.5 11.5 Z" fill="#686868"/><rect x="234.2" y="6" width="3.2" height="11" fill="#686868"/><path d="M255.6 6 V17 L264 11.5 Z M264 6 V17 L272.5 11.5 Z" fill="#686868"/><rect x="274" y="6" width="3.2" height="11" fill="#686868"/><path d="M294 5.5 H311 A4.8 4.8 0 0 1 311 15 H297" fill="none" stroke="#e8e8e8" stroke-width="1.1"/><path d="M292 15 L297.5 12 V18 Z" fill="#f0f0f0"/><path d="M301 11.5 L308 18.5 M308 11.5 L301 18.5" stroke="#f01010" stroke-width="1.7"/></svg>
<div style="left:1635px;top:598px;width:65px;height:21px;background:#5a5a5a;box-shadow:0 0 0 1px #4a4a4a;"></div>
<div class="t" style="top:599.00px;height:20px;line-height:20px;font-size:11.5px;color:#d2d2d2;left:1638.5px;letter-spacing:-0.66px;">1x</div>
<svg style="left:1686.5px;top:606.5px;" width="12" height="7" viewBox="0 0 12 7"><path d="M1 1 L11 1 L6.0 6 Z" fill="#6e6e6e" stroke="#c6c6c6" stroke-width="0.9" stroke-linejoin="miter"/></svg>
<div style="left:1704px;top:598px;width:71px;height:21px;background:#5a5a5a;box-shadow:0 0 0 1px #4a4a4a;"></div>
<div class="t" style="top:599.00px;height:20px;line-height:20px;font-size:11.5px;color:#d2d2d2;left:1707px;letter-spacing:-0.07px;">30 fps</div>
<svg style="left:1761.5px;top:606.5px;" width="12" height="7" viewBox="0 0 12 7"><path d="M1 1 L11 1 L6.0 6 Z" fill="#6e6e6e" stroke="#c6c6c6" stroke-width="0.9" stroke-linejoin="miter"/></svg>
<div style="left:1779px;top:598px;width:139px;height:21px;background:#5a5a5a;box-shadow:0 0 0 1px #4a4a4a;"></div>
<div class="t" style="top:599.00px;height:20px;line-height:20px;font-size:11.5px;color:#d2d2d2;left:1782px;letter-spacing:-0.02px;">Snap &amp; Play on Frames</div>
<svg style="left:1904.5px;top:606.5px;" width="12" height="7" viewBox="0 0 12 7"><path d="M1 1 L11 1 L6.0 6 Z" fill="#6e6e6e" stroke="#c6c6c6" stroke-width="0.9" stroke-linejoin="miter"/></svg>
<div class="t" style="top:621.00px;height:20px;line-height:20px;font-size:11.5px;color:#d2d2d2;left:1px;letter-spacing:-1.00px;">S:</div>
<div style="left:16px;top:623px;width:116px;height:17px;background:#5b5b5b;border-top:1px solid #4a4a4a;border-left:1px solid #4a4a4a;border-bottom:1px solid #8a8a8a;border-right:1px solid #8a8a8a;"></div>
<div class="t" style="top:621.00px;height:20px;line-height:20px;font-size:11.5px;color:#d2d2d2;left:-226.00px;width:600px;text-align:center;">0</div>
<div style="left:134px;top:623px;width:1651px;height:17px;background:#5c5c5c;border-top:1px solid #858585;border-left:1px solid #4a4a4a;border-bottom:1px solid #8a8a8a;border-right:1px solid #8a8a8a;"></div>
<div style="left:135px;top:624px;width:16px;height:15px;background:#5c5c5c;border:1px solid #7a7a7a;"></div>
<svg style="left:138px;top:626px;" width="10" height="11" viewBox="0 0 10 11"><path d="M7.5 1 V10 L2 5.5 Z" fill="#5c5c5c" stroke="#c8c8c8" stroke-width="0.9"/></svg>
<div style="left:151px;top:624px;width:16px;height:15px;background:#5c5c5c;border:1px solid #7a7a7a;"></div>
<svg style="left:152px;top:625px;" width="15" height="13" viewBox="0 0 15 13"><defs><radialGradient id="bl1" cx="0.35" cy="0.3" r="0.75"><stop offset="0" stop-color="#e6f2ff"/><stop offset="0.45" stop-color="#5a98dc"/><stop offset="1" stop-color="#1c4a8e"/></radialGradient></defs><path d="M8 6.5 H14" stroke="#c8c8c8" stroke-width="1.2"/><circle cx="5.5" cy="6.5" r="4.2" fill="url(#bl1)"/></svg>
<div class="t" style="top:621.00px;height:20px;line-height:20px;font-size:11.5px;color:#d2d2d2;left:-120.00px;width:600px;text-align:center;">0</div>
<svg style="left:954px;top:626px;shape-rendering:crispEdges;" width="10" height="11" viewBox="0 0 10 11"><path d="M1.5 0.5 V10.5 M3.5 0.5 V10.5 M5.5 0.5 V10.5 M7.5 0.5 V10.5" stroke="#e0e0e0" stroke-width="1"/></svg>
<div class="t" style="top:621.00px;height:20px;line-height:20px;font-size:11.5px;color:#d2d2d2;left:1142.00px;width:600px;text-align:right;">150</div>
<div style="left:1752px;top:624px;width:16px;height:15px;background:#5c5c5c;border:1px solid #7a7a7a;"></div>
<svg style="left:1752px;top:625px;" width="15" height="13" viewBox="0 0 15 13"><defs><radialGradient id="bl2" cx="0.35" cy="0.3" r="0.75"><stop offset="0" stop-color="#e6f2ff"/><stop offset="0.45" stop-color="#5a98dc"/><stop offset="1" stop-color="#1c4a8e"/></radialGradient></defs><path d="M1 6.5 H7" stroke="#c8c8c8" stroke-width="1.2"/><circle cx="9.5" cy="6.5" r="4.2" fill="url(#bl2)"/></svg>
<div style="left:1768px;top:624px;width:16px;height:15px;background:#5c5c5c;border:1px solid #7a7a7a;"></div>
<svg style="left:1771px;top:626px;" width="10" height="11" viewBox="0 0 10 11"><path d="M2.5 1 V10 L8 5.5 Z" fill="#5c5c5c" stroke="#c8c8c8" stroke-width="0.9"/></svg>
<div class="t" style="top:621.00px;height:20px;line-height:20px;font-size:11.5px;color:#d2d2d2;left:1787.5px;letter-spacing:-1.00px;">E:</div>
<div style="left:1803px;top:623px;width:116px;height:17px;background:#5b5b5b;border-top:1px solid #4a4a4a;border-left:1px solid #4a4a4a;border-bottom:1px solid #8a8a8a;border-right:1px solid #8a8a8a;"></div>
<div class="t" style="top:621.00px;height:20px;line-height:20px;font-size:11.5px;color:#d2d2d2;left:1561.50px;width:600px;text-align:center;">150</div>
<div class="t" style="top:646.00px;height:20px;line-height:20px;font-size:11.5px;color:#d2d2d2;left:1px;letter-spacing:0.61px;">Action</div>
<div style="left:34px;top:642px;width:1885px;height:27px;background:linear-gradient(#808080 0,#787878 30%,#727272 100%);border-top:1px solid #141414;border-left:1px solid #141414;border-bottom:1px solid #9a9a9a;"></div>
<svg style="left:35px;top:643px;shape-rendering:crispEdges;overflow:hidden;" width="1883" height="25" viewBox="0 0 1883 25"><path d="M41.5 1V3M54.5 1V3M66.5 1V3M78.5 1V3M103.5 1V3M115.5 1V3M128.5 1V3M140.5 1V3M164.5 1V3M177.5 1V3M189.5 1V3M201.5 1V3M226.5 1V3M238.5 1V3M251.5 1V3M263.5 1V3M288.5 1V3M300.5 1V3M312.5 1V3M324.5 1V3M349.5 1V3M361.5 1V3M374.5 1V3M386.5 1V3M411.5 1V3M423.5 1V3M435.5 1V3M448.5 1V3M472.5 1V3M484.5 1V3M497.5 1V3M509.5 1V3M534.5 1V3M546.5 1V3M558.5 1V3M571.5 1V3M595.5 1V3M608.5 1V3M620.5 1V3M632.5 1V3M657.5 1V3M669.5 1V3M681.5 1V3M694.5 1V3M718.5 1V3M731.5 1V3M743.5 1V3M755.5 1V3M780.5 1V3M792.5 1V3M805.5 1V3M817.5 1V3M841.5 1V3M854.5 1V3M866.5 1V3M878.5 1V3M903.5 1V3M915.5 1V3M928.5 1V3M940.5 1V3M965.5 1V3M977.5 1V3M989.5 1V3M1001.5 1V3M1026.5 1V3M1038.5 1V3M1051.5 1V3M1063.5 1V3M1088.5 1V3M1100.5 1V3M1112.5 1V3M1125.5 1V3M1149.5 1V3M1161.5 1V3M1174.5 1V3M1186.5 1V3M1211.5 1V3M1223.5 1V3M1235.5 1V3M1248.5 1V3M1272.5 1V3M1285.5 1V3M1297.5 1V3M1309.5 1V3M1334.5 1V3M1346.5 1V3M1358.5 1V3M1371.5 1V3M1395.5 1V3M1408.5 1V3M1420.5 1V3M1432.5 1V3M1457.5 1V3M1469.5 1V3M1481.5 1V3M1494.5 1V3M1518.5 1V3M1531.5 1V3M1543.5 1V3M1555.5 1V3M1580.5 1V3M1592.5 1V3M1605.5 1V3M1617.5 1V3M1641.5 1V3M1654.5 1V3M1666.5 1V3M1678.5 1V3M1703.5 1V3M1715.5 1V3M1728.5 1V3M1740.5 1V3M1765.5 1V3M1777.5 1V3M1789.5 1V3M1801.5 1V3M1826.5 1V3M1838.5 1V3M1851.5 1V3M1863.5 1V3" stroke="#b4b4b4" stroke-width="1"/><path d="M91.5 1V9M152.5 1V9M275.5 1V9M337.5 1V9M460.5 1V9M521.5 1V9M645.5 1V9M706.5 1V9M829.5 1V9M891.5 1V9M1014.5 1V9M1075.5 1V9M1198.5 1V9M1260.5 1V9M1383.5 1V9M1445.5 1V9M1568.5 1V9M1629.5 1V9M1752.5 1V9M1814.5 1V9M1875.5 1V9" stroke="#cfcfcf" stroke-width="1"/><path d="M214.5 1V19.5M398.5 1V19.5M583.5 1V19.5M768.5 1V19.5M952.5 1V19.5M1137.5 1V19.5M1321.5 1V19.5M1506.5 1V19.5M1691.5 1V19.5" stroke="#2a2a2a" stroke-width="1"/><path d="M214.5 1V19.5M398.5 1V19.5M583.5 1V19.5M768.5 1V19.5M952.5 1V19.5M1137.5 1V19.5M1321.5 1V19.5M1506.5 1V19.5M1691.5 1V19.5" stroke="#c4c4c4" stroke-width="1" transform="translate(1 0)"/></svg>
<div class="t" style="top:650.00px;height:20px;line-height:20px;font-size:11.5px;color:#161616;left:253.5px;transform:scaleX(0.86);transform-origin:0 50%;">15</div>
<div class="t" style="top:650.00px;height:20px;line-height:20px;font-size:11.5px;color:#161616;left:437.5px;transform:scaleX(0.86);transform-origin:0 50%;">30</div>
<div class="t" style="top:650.00px;height:20px;line-height:20px;font-size:11.5px;color:#161616;left:622.5px;transform:scaleX(0.86);transform-origin:0 50%;">45</div>
<div class="t" style="top:650.00px;height:20px;line-height:20px;font-size:11.5px;color:#161616;left:807.5px;transform:scaleX(0.86);transform-origin:0 50%;">60</div>
<div class="t" style="top:650.00px;height:20px;line-height:20px;font-size:11.5px;color:#161616;left:991.5px;transform:scaleX(0.86);transform-origin:0 50%;">75</div>
<div class="t" style="top:650.00px;height:20px;line-height:20px;font-size:11.5px;color:#161616;left:1176.5px;transform:scaleX(0.86);transform-origin:0 50%;">90</div>
<div class="t" style="top:650.00px;height:20px;line-height:20px;font-size:11.5px;color:#161616;left:1360.5px;transform:scaleX(0.86);transform-origin:0 50%;">105</div>
<div class="t" style="top:650.00px;height:20px;line-height:20px;font-size:11.5px;color:#161616;left:1545.5px;transform:scaleX(0.86);transform-origin:0 50%;">120</div>
<div class="t" style="top:650.00px;height:20px;line-height:20px;font-size:11.5px;color:#161616;left:1730.5px;transform:scaleX(0.86);transform-origin:0 50%;">135</div>
<div style="left:35px;top:643px;width:10px;height:25px;background:#9a0028;"></div>
<div style="left:45px;top:651px;width:37px;height:17px;background:linear-gradient(#474747,#646464);border-top:1px solid #f4f4f4;border-left:1px solid #f4f4f4;border-bottom:1px solid #0a0a0a;border-right:1px solid #0a0a0a;"></div>
<div style="left:62px;top:643px;width:1px;height:25px;background:#e8e8e8;"></div>
<div style="left:63px;top:643px;width:1px;height:25px;background:#00ee00;"></div>
<div class="t" style="top:650.00px;height:20px;line-height:20px;font-size:11.5px;color:#141414;left:-229.50px;width:600px;text-align:center;">0</div>
<div style="left:639px;top:565px;width:639px;height:3px;background-image:linear-gradient(90deg,transparent 1px,#626262 1px,#626262 3px,transparent 3px),linear-gradient(90deg,#3a3a3a 2px,transparent 2px);background-size:5px 2px,5px 2px;background-repeat:repeat-x;background-position:0 1px,0 0;"></div>
<div style="left:639px;top:674px;width:639px;height:3px;background-image:linear-gradient(90deg,transparent 1px,#626262 1px,#626262 3px,transparent 3px),linear-gradient(90deg,#3a3a3a 2px,transparent 2px);background-size:5px 2px,5px 2px;background-repeat:repeat-x;background-position:0 1px,0 0;"></div>
<div class="grip" style="left:4px;top:687px;width:576px;"></div>
<div class="t" style="top:681.00px;height:20px;line-height:20px;font-size:11.5px;color:#d0d0d0;left:312.11px;width:600px;text-align:center;letter-spacing:0.22px;">Navigator</div>
<div class="grip" style="left:644px;top:687px;width:578px;"></div>
<svg style="left:1225px;top:680.5px;" width="19" height="19" viewBox="0 0 19 19"><rect x="0.5" y="0.5" width="18" height="18.2" rx="3.5" fill="#484848" stroke="#2c2c2c"/><rect x="8" y="3.5" width="7.5" height="7.5" fill="#404040" stroke="#3a3a3a" stroke-width="1.6"/><rect x="4" y="7.5" width="8.5" height="8" fill="#484848" stroke="#3a3a3a" stroke-width="2"/></svg>
<svg style="left:1246px;top:680.5px;" width="19" height="19" viewBox="0 0 19 19"><rect x="0.5" y="0.5" width="18" height="18.2" rx="3.5" fill="#484848" stroke="#2c2c2c"/><path d="M4.5 4.5 L14.5 14.5 M14.5 4.5 L4.5 14.5" stroke="#3a3a3a" stroke-width="2.4" fill="none"/></svg>
<div style="left:0px;top:725px;width:1266px;height:3px;background:#787878;border-top:1px solid #7e7e7e;border-bottom:1px solid #5a5a5a;"></div>
<div style="left:1px;top:705px;width:70px;height:22px;background:#5a5a5a;border:1px solid #747474;border-bottom:none;border-radius:4px 4px 0 0;"></div>
<div class="t" style="top:706.00px;height:20px;line-height:20px;font-size:11.5px;color:#d6d6d6;left:10px;letter-spacing:0.35px;">Navigator</div>
<div style="left:73px;top:707px;width:75px;height:19px;background:#3b3b3b;border:1px solid #8a8a8a;border-bottom:none;border-radius:4px 4px 0 0;"></div>
<div class="t" style="top:707.00px;height:20px;line-height:20px;font-size:11.5px;color:#dadada;left:82.5px;letter-spacing:-0.02px;">Dopesheet</div>
<div style="left:149px;top:707px;width:60px;height:19px;background:#3b3b3b;border:1px solid #8a8a8a;border-bottom:none;border-radius:4px 4px 0 0;"></div>
<div class="t" style="top:707.00px;height:20px;line-height:20px;font-size:11.5px;color:#dadada;left:158px;letter-spacing:-0.41px;">FCurves</div>
<div style="left:210px;top:707px;width:46px;height:19px;background:#3b3b3b;border:1px solid #8a8a8a;border-bottom:none;border-radius:4px 4px 0 0;"></div>
<div class="t" style="top:707.00px;height:20px;line-height:20px;font-size:11.5px;color:#dadada;left:219px;letter-spacing:0.04px;">Story</div>
<div style="left:257px;top:707px;width:111px;height:19px;background:#3b3b3b;border:1px solid #8a8a8a;border-bottom:none;border-radius:4px 4px 0 0;"></div>
<div class="t" style="top:707.00px;height:20px;line-height:20px;font-size:11.5px;color:#dadada;left:266px;letter-spacing:0.18px;">Animation Trigger</div>
<div style="left:3px;top:733px;width:52px;height:18px;background:#5a5a5a;box-shadow:0 0 0 1px #4a4a4a;"></div>
<div class="t" style="top:732.00px;height:20px;line-height:20px;font-size:11.5px;color:#d2d2d2;left:9.5px;letter-spacing:-0.21px;">Filters...</div>
<svg style="left:66px;top:736px;shape-rendering:crispEdges;" width="17" height="12" viewBox="0 0 17 12"><path d="M0 1.5 H10 M12 1.5 H16 M0 6 H10 M12 6 H16 M0 10.5 H10 M12 10.5 H16" stroke="#e4e4e4" stroke-width="1.2"/></svg>
<svg style="left:93px;top:732px;" width="20" height="20" viewBox="0 0 20 20"><path d="M7 1.5 L8.6 5.8 L13 6 L9.5 8.8 L10.8 13.2 L7 10.6 L3.2 13.2 L4.5 8.8 L1 6 L5.4 5.8 Z" fill="#4a4a4a" stroke="#d8d8d8" stroke-width="0.9"/><path d="M12 9 L12 17.5 L14 15.8 L15.4 18.6 L16.8 17.9 L15.5 15.2 L18 15 Z" fill="#2a7fb0" stroke="#e8e8e8" stroke-width="0.7"/></svg>
<svg style="left:123px;top:734px;" width="17" height="16" viewBox="0 0 17 16"><path d="M2.5 6.5 V4.5 A3 3 0 0 1 8.5 4.5 V5" fill="none" stroke="#e8c020" stroke-width="1.6"/><rect x="5" y="7" width="10" height="7.5" rx="1" fill="#d8b018" stroke="#7a6208" stroke-width="0.8"/><circle cx="10" cy="10.3" r="1.2" fill="#2a2200"/><rect x="9.5" y="10.5" width="1" height="2.3" fill="#2a2200"/></svg>
<svg style="left:154px;top:734px;" width="16" height="17" viewBox="0 0 16 17"><defs><linearGradient id="la" x1="0" y1="0" x2="1" y2="0"><stop offset="0" stop-color="#8cc4f4"/><stop offset="1" stop-color="#4a88c8"/></linearGradient></defs><path d="M1 8.5 L8 1.5 V5 H15 V12 H8 V15.5 Z" fill="url(#la)" stroke="#1a1a1a" stroke-width="0.8"/></svg>
<svg style="left:178px;top:734px;" width="16" height="17" viewBox="0 0 16 17"><defs><linearGradient id="ra" x1="0" y1="0" x2="1" y2="0"><stop offset="0" stop-color="#9a9a9a"/><stop offset="0.5" stop-color="#f0f0f0"/><stop offset="1" stop-color="#d8d8d8"/></linearGradient></defs><path d="M15 8.5 L8 1.5 V5 H1 V12 H8 V15.5 Z" fill="url(#ra)"/></svg>
<svg style="left:6px;top:758px;" width="16" height="16" viewBox="0 0 16 16"><path d="M7.5 8 L13.5 13.5" stroke="#d0d0d0" stroke-width="1.8"/><circle cx="5.8" cy="5.8" r="4" fill="#f8f8f8"/></svg>
<div style="left:26px;top:755px;width:170px;height:20px;background:#5b5b5b;border-top:1px solid #4c4c4c;border-left:1px solid #4c4c4c;border-bottom:1px solid #8c8c8c;border-right:1px solid #8c8c8c;"></div>
<div style="left:1px;top:776px;width:200px;height:254px;background:#282828;border-top:2px solid #1c1c1c;border-left:2px solid #1c1c1c;border-bottom:1px solid #6e6e6e;border-right:1px solid #3a3a3a;"></div>
<svg style="left:19px;top:778.0px;" width="16" height="15" viewBox="0 0 16 15"><path d="M3 6 Q3 4.5 8.5 4.5 Q14 4.5 14 6 Q15.5 9 13 12.5 H4.5 Q1.5 9 3 6 Z" fill="#f2f2f2"/><path d="M0.5 4.5 L4 7 L3.2 8.5 Z" fill="#e8e8e8"/><path d="M13.5 6.5 Q16.5 6.5 15.5 9 Q14.8 10.5 13.3 10.5" fill="none" stroke="#e0e0e0" stroke-width="1"/><rect x="7.5" y="2.2" width="2" height="2" fill="#f2f2f2"/><path d="M4.5 12.5 H13" stroke="#b0b0b0" stroke-width="1"/></svg>
<div class="t" style="top:776.00px;height:20px;line-height:20px;font-size:11.5px;color:#d6d6d6;left:38.5px;letter-spacing:-0.45px;">Scene</div>
<svg style="left:8px;top:795.0px;shape-rendering:crispEdges;" width="10" height="10" viewBox="0 0 10 10"><path d="M0 5 H10 M5 0 V10" stroke="#7c7c7c" stroke-width="1.6"/></svg>
<svg style="left:19px;top:793.0px;" width="16" height="15" viewBox="0 0 16 15"><defs><linearGradient id="au" x1="0" y1="0" x2="1" y2="1"><stop offset="0" stop-color="#f4f4f4"/><stop offset="1" stop-color="#7a7a7a"/></linearGradient></defs><path d="M6.5 0.5 Q13 3 15 11 Q14 15 10.5 13.5 Q5 11 4 5 Q4.5 1.5 6.5 0.5 Z" fill="url(#au)"/><path d="M6.5 2 Q9 7 11.5 12.5" stroke="#3a3a3a" stroke-width="0.9" fill="none"/></svg>
<div class="t" style="top:791.00px;height:20px;line-height:20px;font-size:11.5px;color:#d6d6d6;left:38.5px;letter-spacing:0.52px;">Audio</div>
<svg style="left:8px;top:810.0px;shape-rendering:crispEdges;" width="10" height="10" viewBox="0 0 10 10"><path d="M0 5 H10 M5 0 V10" stroke="#7c7c7c" stroke-width="1.6"/></svg>
<svg style="left:19px;top:808.0px;" width="16" height="15" viewBox="0 0 16 15"><circle cx="4.6" cy="4.6" r="3.5" fill="#cfcfcf" stroke="#8a8a8a" stroke-width="0.8"/><circle cx="4.6" cy="4.6" r="1.3" fill="#555"/><circle cx="11.2" cy="4" r="3.5" fill="#d8d8d8" stroke="#8a8a8a" stroke-width="0.8"/><circle cx="11.2" cy="4" r="1.3" fill="#555"/><path d="M5.5 9.5 L13 7.8 L14.5 12 L7 14.5 Z" fill="#0c0c0c"/><path d="M13.5 8.5 L16 7.5 L16 10.8 L14.3 11 Z" fill="#0c0c0c"/><path d="M8 11.6 L12 10.5" stroke="#b0b0b0" stroke-width="1"/></svg>
<div class="t" style="top:806.00px;height:20px;line-height:20px;font-size:11.5px;color:#d6d6d6;left:38.5px;letter-spacing:-0.53px;">Cameras</div>
<svg style="left:19px;top:823.0px;" width="16" height="15" viewBox="0 0 16 15"><defs><radialGradient id="ct" cx="0.38" cy="0.32" r="0.75"><stop offset="0" stop-color="#e0f0ff"/><stop offset="0.5" stop-color="#5a98dc"/><stop offset="1" stop-color="#1c4a8e"/></radialGradient></defs><path d="M5 4.5 L12 11" stroke="#c8c8c8" stroke-width="1.2"/><circle cx="4.8" cy="3.8" r="2.9" fill="url(#ct)"/><circle cx="12.4" cy="11.2" r="2.6" fill="url(#ct)"/></svg>
<div class="t" style="top:821.00px;height:20px;line-height:20px;font-size:11.5px;color:#d6d6d6;left:38.5px;letter-spacing:0.03px;">Constraints</div>
<div style="left:36px;top:839.0px;width:164px;height:14px;background:#3d4c61;"></div>
<svg style="left:8px;top:840.0px;shape-rendering:crispEdges;" width="10" height="10" viewBox="0 0 10 10"><path d="M0 5 H10 M5 0 V10" stroke="#7c7c7c" stroke-width="1.6"/></svg>
<svg style="left:19px;top:838.0px;" width="16" height="15" viewBox="0 0 16 15"><text x="0" y="12" font-size="12.5" font-weight="bold" fill="#f2f2f2" font-family="Liberation Sans,sans-serif" textLength="15.5" lengthAdjust="spacingAndGlyphs">I/O</text></svg>
<div class="t" style="top:836.00px;height:20px;line-height:20px;font-size:11.5px;color:#d6d6d6;left:38.5px;letter-spacing:-0.23px;">Devices</div>
<svg style="left:19px;top:853.0px;" width="16" height="16" viewBox="0 0 16 16"><ellipse cx="4.3" cy="5.3" rx="3.5" ry="4.7" fill="url(#fcL)"/><ellipse cx="11.2" cy="4.9" rx="3.3" ry="4.5" fill="url(#fcR)"/><path d="M8 4.4 Q11.8 4.4 11.6 9 Q11.2 13 8.8 15.2 H7.3 Q4.6 13 4.4 9 Q4.2 4.4 8 4.4 Z" fill="url(#fcF)"/><path d="M6 8.6 H7.4 M8.8 8.6 H10.2 M7.2 12 H8.9" stroke="#5a3a24" stroke-width="0.6"/></svg>
<div class="t" style="top:851.00px;height:20px;line-height:20px;font-size:11.5px;color:#d6d6d6;left:38.5px;letter-spacing:-0.04px;">Groups</div>
<svg style="left:19px;top:868.0px;" width="16" height="15" viewBox="0 0 16 15"><path d="M5 3.5 L7 1.2 H12 L13 3.5 H14.5 V10 H5 Z" fill="#e8c848"/><path d="M1.5 7 L3.5 4.8 H8 L9 7 H12 V14 H1.5 Z" fill="#f0d868" stroke="#a88818" stroke-width="0.5"/></svg>
<div class="t" style="top:866.00px;height:20px;line-height:20px;font-size:11.5px;color:#d6d6d6;left:38.5px;letter-spacing:-0.84px;">Sets</div>
<svg style="left:8px;top:885.0px;shape-rendering:crispEdges;" width="10" height="10" viewBox="0 0 10 10"><path d="M0 5 H10 M5 0 V10" stroke="#7c7c7c" stroke-width="1.6"/></svg>
<svg style="left:19px;top:883.0px;" width="16" height="15" viewBox="0 0 16 15"><defs><radialGradient id="ln" cx="0.4" cy="0.35" r="0.7"><stop offset="0" stop-color="#ffffff"/><stop offset="0.6" stop-color="#d8d0a0"/><stop offset="1" stop-color="#8a8050"/></radialGradient></defs><path d="M8 0.2 L9.2 3 H6.8 Z" fill="#e8c820" transform="rotate(0 8 7.5)"/><path d="M8 0.2 L9.2 3 H6.8 Z" fill="#e8c820" transform="rotate(30 8 7.5)"/><path d="M8 0.2 L9.2 3 H6.8 Z" fill="#e8c820" transform="rotate(60 8 7.5)"/><path d="M8 0.2 L9.2 3 H6.8 Z" fill="#e8c820" transform="rotate(90 8 7.5)"/><path d="M8 0.2 L9.2 3 H6.8 Z" fill="#e8c820" transform="rotate(120 8 7.5)"/><path d="M8 0.2 L9.2 3 H6.8 Z" fill="#e8c820" transform="rotate(150 8 7.5)"/><path d="M8 0.2 L9.2 3 H6.8 Z" fill="#e8c820" transform="rotate(180 8 7.5)"/><path d="M8 0.2 L9.2 3 H6.8 Z" fill="#e8c820" transform="rotate(210 8 7.5)"/><path d="M8 0.2 L9.2 3 H6.8 Z" fill="#e8c820" transform="rotate(240 8 7.5)"/><path d="M8 0.2 L9.2 3 H6.8 Z" fill="#e8c820" transform="rotate(270 8 7.5)"/><path d="M8 0.2 L9.2 3 H6.8 Z" fill="#e8c820" transform="rotate(300 8 7.5)"/><path d="M8 0.2 L9.2 3 H6.8 Z" fill="#e8c820" transform="rotate(330 8 7.5)"/><circle cx="8" cy="7.5" r="4.6" fill="url(#ln)" stroke="#b09a18" stroke-width="0.6"/></svg>
<div class="t" style="top:881.00px;height:20px;line-height:20px;font-size:11.5px;color:#d6d6d6;left:38.5px;letter-spacing:0.16px;">Lights</div>
<svg style="left:20px;top:898.0px;" width="14" height="14" viewBox="0 0 14 14"><defs><radialGradient id="mt" cx="0.38" cy="0.32" r="0.75"><stop offset="0" stop-color="#f4f4f4"/><stop offset="0.5" stop-color="#9a9a9a"/><stop offset="1" stop-color="#3a3a3a"/></radialGradient></defs><circle cx="7" cy="7" r="6" fill="url(#mt)"/></svg>
<div class="t" style="top:896.00px;height:20px;line-height:20px;font-size:11.5px;color:#d6d6d6;left:38.5px;letter-spacing:0.11px;">Materials</div>
<svg style="left:19px;top:913.0px;" width="16" height="16" viewBox="0 0 16 16"><path d="M4 1 L6.5 6 L3 9 L5 14.5 M6.5 6 L9 10 L7 15 M2 4 L6.5 6 L10.5 4" stroke="#e8e8e8" stroke-width="1.2" fill="none"/><circle cx="11.5" cy="2.5" r="1.6" fill="#d83020"/><path d="M11 4 L12 9 L10 13" stroke="#c02020" stroke-width="1.3" fill="none"/><path d="M12 6 L15 7.5" stroke="#e8c820" stroke-width="1.1"/></svg>
<div class="t" style="top:911.00px;height:20px;line-height:20px;font-size:11.5px;color:#d6d6d6;left:38.5px;letter-spacing:-0.62px;">Poses</div>
<svg style="left:8px;top:930.0px;shape-rendering:crispEdges;" width="10" height="10" viewBox="0 0 10 10"><path d="M0 5 H10 M5 0 V10" stroke="#7c7c7c" stroke-width="1.6"/></svg>
<svg style="left:20px;top:928.0px;" width="14" height="14" viewBox="0 0 14 14"><defs><radialGradient id="sh" cx="0.38" cy="0.32" r="0.75"><stop offset="0" stop-color="#e0e0e0"/><stop offset="0.5" stop-color="#7a7a7a"/><stop offset="1" stop-color="#1a1a1a"/></radialGradient></defs><circle cx="7" cy="7" r="6" fill="url(#sh)"/></svg>
<div class="t" style="top:926.00px;height:20px;line-height:20px;font-size:11.5px;color:#d6d6d6;left:38.5px;letter-spacing:-0.39px;">Shaders</div>
<svg style="left:8px;top:945.0px;shape-rendering:crispEdges;" width="10" height="10" viewBox="0 0 10 10"><path d="M0 5 H10 M5 0 V10" stroke="#7c7c7c" stroke-width="1.6"/></svg>
<svg style="left:19px;top:943.0px;" width="16" height="15" viewBox="0 0 16 15"><path d="M3 5.5 L12.5 2.5 L13.2 5 L3.7 8 Z" fill="#e0e0e0"/><path d="M5 5 L6.3 7.2 M8 4 L9.3 6.2 M11 3 L12.3 5.2" stroke="#2a2a2a" stroke-width="1.1"/><path d="M3.5 8 H13.5 V14 H5 Z" fill="#6a6a6a" stroke="#9a9a9a" stroke-width="0.6"/></svg>
<div class="t" style="top:941.00px;height:20px;line-height:20px;font-size:11.5px;color:#d6d6d6;left:38.5px;letter-spacing:-0.89px;">Takes</div>
<svg style="left:8px;top:960.0px;shape-rendering:crispEdges;" width="10" height="10" viewBox="0 0 10 10"><path d="M0 5 H10 M5 0 V10" stroke="#7c7c7c" stroke-width="1.6"/></svg>
<svg style="left:19px;top:958.0px;" width="16" height="15" viewBox="0 0 16 15"><rect x="1.5" y="0.5" width="13" height="13.5" fill="#f4f4f4"/><rect x="1.5" y="0.5" width="3.3" height="8" fill="#e8e020"/><rect x="4.8" y="0.5" width="3.2" height="8" fill="#30d8d8"/><rect x="8" y="0.5" width="3.2" height="8" fill="#e040c8"/><rect x="11.2" y="0.5" width="3.3" height="8" fill="#3050e0"/><rect x="1.5" y="8.5" width="13" height="2" fill="#202060"/><rect x="6" y="10.5" width="4" height="3.5" fill="#181818"/><rect x="10" y="10.5" width="4.5" height="3.5" fill="#6a3aa0"/></svg>
<div class="t" style="top:956.00px;height:20px;line-height:20px;font-size:11.5px;color:#d6d6d6;left:38.5px;letter-spacing:-0.09px;">Videos</div>
<svg style="left:8px;top:975.0px;shape-rendering:crispEdges;" width="10" height="10" viewBox="0 0 10 10"><path d="M0 5 H10 M5 0 V10" stroke="#7c7c7c" stroke-width="1.6"/></svg>
<svg style="left:19px;top:973.0px;" width="16" height="15" viewBox="0 0 16 15"><circle cx="8" cy="7.5" r="6.5" fill="#1a1a1a" stroke="#f0f0f0" stroke-width="1.4"/><path d="M8 1.5 V6 M8 9 V13.5 M2 7.5 H6.5 M9.5 7.5 H14" stroke="#f0f0f0" stroke-width="1.6"/><circle cx="8" cy="7.5" r="1.6" fill="#f0f0f0"/></svg>
<div class="t" style="top:971.00px;height:20px;line-height:20px;font-size:11.5px;color:#d6d6d6;left:38.5px;letter-spacing:-0.37px;">System</div>
<div style="left:202px;top:729px;width:2px;height:303px;background:#2c2c2c;"></div>
<div style="left:209px;top:729px;width:1px;height:303px;background:#2c2c2c;"></div>
<div style="left:222px;top:741px;width:12px;height:12px;background:#ff0000;border-bottom:1px solid #7a7a7a;border-right:1px solid #7a7a7a;"></div>
<div class="t" style="top:737.00px;height:20px;line-height:20px;font-size:11.5px;color:#d2d2d2;left:242px;letter-spacing:0.35px;">Online</div>
<div style="left:222px;top:765px;width:12px;height:12px;background:#2c2c2c;border-bottom:1px solid #6a6a6a;border-right:1px solid #6a6a6a;border-top:1px solid #3a3a3a;border-left:1px solid #3a3a3a;"></div>
<div class="t" style="top:761.00px;height:20px;line-height:20px;font-size:11.5px;color:#7e7e7e;left:242px;letter-spacing:-0.04px;">Live</div>
<div style="left:222px;top:789px;width:12px;height:12px;background:#2c2c2c;border-bottom:1px solid #6a6a6a;border-right:1px solid #6a6a6a;border-top:1px solid #3a3a3a;border-left:1px solid #3a3a3a;"></div>
<div class="t" style="top:785.00px;height:20px;line-height:20px;font-size:11.5px;color:#7e7e7e;left:242px;letter-spacing:0.20px;">Recording</div>
<div class="t" style="top:809.00px;height:20px;line-height:20px;font-size:11.5px;color:#d2d2d2;left:218.5px;letter-spacing:0.44px;">Model binding:</div>
<div style="left:219px;top:833px;width:142px;height:20px;background:#5a5a5a;box-shadow:0 0 0 1px #4a4a4a;"></div>
<div class="t" style="top:833.00px;height:20px;line-height:20px;font-size:11.5px;color:#d2d2d2;left:222.5px;letter-spacing:0.33px;">None</div>
<svg style="left:347.5px;top:841px;" width="12" height="7" viewBox="0 0 12 7"><path d="M1 1 L11 1 L6.0 6 Z" fill="#6e6e6e" stroke="#c6c6c6" stroke-width="0.9" stroke-linejoin="miter"/></svg>
<div class="t" style="top:857.00px;height:20px;line-height:20px;font-size:11.5px;color:#d2d2d2;left:-240.04px;width:600px;text-align:right;letter-spacing:-0.04px;">0.0 sample(s)/s</div>
<div style="left:216px;top:939px;width:146px;height:91px;border:1px solid #6c6c6c;"></div>
<div class="t" style="top:940.00px;height:20px;line-height:20px;font-size:11.5px;color:#d2d2d2;left:-11.86px;width:600px;text-align:center;letter-spacing:0.28px;">Device information</div>
<div class="t" style="top:964.00px;height:20px;line-height:20px;font-size:11.5px;color:#d2d2d2;left:220px;">?</div>
<div class="t" style="top:985.00px;height:20px;line-height:20px;font-size:11.5px;color:#d2d2d2;left:220px;">?</div>
<div class="t" style="top:1006.00px;height:20px;line-height:20px;font-size:11.5px;color:#d2d2d2;left:220px;">?</div>
<div style="left:375px;top:734px;width:248px;height:64px;background:#5a5a5a;"></div>
<svg style="left:370px;top:728px;overflow:hidden;" width="260" height="74" viewBox="0 0 1920 546"><g><defs><linearGradient id="lgA" gradientUnits="userSpaceOnUse" x1="40" y1="300" x2="420" y2="300"><stop offset="0" stop-color="#ffd650"/><stop offset="0.4" stop-color="#ffa52a"/><stop offset="1" stop-color="#ff7c0c"/></linearGradient><linearGradient id="lgB" gradientUnits="userSpaceOnUse" x1="200" y1="60" x2="560" y2="440"><stop offset="0" stop-color="#ffd04a"/><stop offset="0.55" stop-color="#ff8e1a"/><stop offset="1" stop-color="#ff7a0c"/></linearGradient><linearGradient id="lgC" gradientUnits="userSpaceOnUse" x1="520" y1="60" x2="870" y2="440"><stop offset="0" stop-color="#ffc744"/><stop offset="0.55" stop-color="#ff9622"/><stop offset="1" stop-color="#ff7a0c"/></linearGradient></defs><path d="M600 122 L490 222" stroke="#ff7d10" stroke-width="136" stroke-linecap="round" fill="none"/><path d="M598 122 L862 440" stroke="url(#lgC)" stroke-width="136" stroke-linecap="round" fill="none"/><path d="M262 122 L122 296 Q92 345 120 390 Q152 446 236 442 L395 322" stroke="url(#lgA)" stroke-width="136" stroke-linecap="round" stroke-linejoin="round" fill="none"/><path d="M262 122 L552 440" stroke="url(#lgB)" stroke-width="136" stroke-linecap="round" fill="none"/><path d="M273 186 L172 316 Q158 346 178 368 Q204 388 242 378 L336 288 Z" fill="#5a5a5a" stroke="#5a5a5a" stroke-width="10" stroke-linejoin="round"/><path d="M108 492 L196 392" stroke="#5a5a5a" stroke-width="12"/><path d="M480 448 L568 344" stroke="#5a5a5a" stroke-width="12"/><path d="M790 448 L878 342" stroke="#5a5a5a" stroke-width="12"/></g></svg>
<div class="t" style="left:510.5px;top:734px;width:118px;height:70px;line-height:67px;font-size:50px;font-weight:700;color:#ffffff;font-family:'Liberation Sans','Noto Sans CJK SC',sans-serif;letter-spacing:8px;">魔迅</div>
<div class="t" style="top:731.00px;height:20px;line-height:20px;font-size:11.5px;color:#e0e0e0;left:630.3px;letter-spacing:0.34px;">HengZhuo Lite Motion Studio</div>
<div class="t" style="top:759.00px;height:20px;line-height:20px;font-size:11.5px;color:#e0e0e0;left:630.3px;letter-spacing:-0.14px;">Version 1.8.54</div>
<div class="t" style="top:773.00px;height:20px;line-height:20px;font-size:11.5px;color:#e0e0e0;left:630.3px;letter-spacing:-0.16px;">All Rights Reserved @ 2024</div>
<div style="left:376px;top:814px;width:496px;height:102px;border-left:2px solid #141414;border-bottom:2px solid #8a8a8a;border-right:2px solid #8a8a8a;"></div>
<div style="left:376px;top:814px;width:9px;height:2px;background:#141414;"></div>
<div style="left:559px;top:814px;width:313px;height:2px;background:#141414;"></div>
<div style="left:387px;top:812px;width:14px;height:14px;background:#5c5c5c;border:1px solid #8a8a8a;"></div>
<svg style="left:389px;top:814px;" width="10" height="10" viewBox="0 0 10 10"><path d="M1.5 5 L4 8 L8.8 1.8" fill="none" stroke="#f0f0f0" stroke-width="1.5"/></svg>
<div class="t" style="top:809.00px;height:20px;line-height:20px;font-size:11.5px;color:#d6d6d6;left:408.2px;letter-spacing:-0.03px;">Use Network Stream</div>
<div class="t" style="top:829.00px;height:20px;line-height:20px;font-size:11.5px;color:#d6d6d6;left:416.3px;letter-spacing:0.24px;">Protocol :</div>
<svg style="left:475px;top:832px;" width="14" height="14" viewBox="0 0 14 14"><circle cx="7" cy="7" r="5.6" fill="#3a3a3a" stroke="#141414" stroke-width="1.3" stroke-dasharray="5 1.4"/><circle cx="7" cy="7" r="2.3" fill="#8a8a8a"/></svg>
<div class="t" style="top:829.00px;height:20px;line-height:20px;font-size:11.5px;color:#d6d6d6;left:495.4px;letter-spacing:-1.00px;">TCP</div>
<svg style="left:533.7px;top:832px;" width="14" height="14" viewBox="0 0 14 14"><circle cx="7" cy="7" r="5.6" fill="#3a3a3a" stroke="#141414" stroke-width="1.3" stroke-dasharray="5 1.4"/><circle cx="7" cy="7" r="4.4" fill="#262626"/></svg>
<div class="t" style="top:829.00px;height:20px;line-height:20px;font-size:11.5px;color:#d6d6d6;left:554.5px;letter-spacing:-1.00px;">UDP</div>
<div class="t" style="top:829.00px;height:20px;line-height:20px;font-size:11.5px;color:#7e7e7e;left:645.2px;letter-spacing:-0.14px;">Stream Data Type:</div>
<div style="left:745px;top:828px;width:119px;height:22px;background:#555555;box-shadow:0 0 0 1px #4a4a4a;"></div>
<div class="t" style="top:829.00px;height:20px;line-height:20px;font-size:11.5px;color:#7e7e7e;left:749px;letter-spacing:-1.00px;">JSON</div>
<svg style="left:850.5px;top:837px;" width="12" height="7" viewBox="0 0 12 7"><path d="M1 1 L11 1 L6.0 6 Z" fill="#6e6e6e" stroke="#c6c6c6" stroke-width="0.9" stroke-linejoin="miter"/></svg>
<div class="t" style="top:857.00px;height:20px;line-height:20px;font-size:11.5px;color:#d6d6d6;left:420.4px;letter-spacing:-0.05px;">Host  IP :</div>
<div style="left:473px;top:855px;width:200px;height:24px;background:#5a5a5a;border-top:1px solid #4c4c4c;border-left:1px solid #4c4c4c;border-bottom:1px solid #8c8c8c;border-right:1px solid #8c8c8c;"></div>
<div class="t" style="top:857.00px;height:20px;line-height:20px;font-size:11.5px;color:#d6d6d6;left:477.5px;letter-spacing:-0.46px;">192.168.2.135</div>
<div style="left:692px;top:855px;width:172px;height:24px;background:#5a5a5a;border-top:1px solid #4c4c4c;border-left:1px solid #4c4c4c;border-bottom:1px solid #8c8c8c;border-right:1px solid #8c8c8c;"></div>
<div class="t" style="top:857.00px;height:20px;line-height:20px;font-size:11.5px;color:#d6d6d6;left:696px;letter-spacing:-0.53px;">7788</div>
<div class="t" style="top:885.00px;height:20px;line-height:20px;font-size:11.5px;color:#7e7e7e;left:420.4px;letter-spacing:-0.13px;">Local IP :</div>
<div style="left:473px;top:883px;width:200px;height:24px;background:#565656;border-top:1px solid #4c4c4c;border-left:1px solid #4c4c4c;border-bottom:1px solid #8c8c8c;border-right:1px solid #8c8c8c;"></div>
<div class="t" style="top:885.00px;height:20px;line-height:20px;font-size:11.5px;color:#7e7e7e;left:477.5px;letter-spacing:-0.46px;">192.168.2.135</div>
<svg style="left:658.5px;top:892.5px;" width="12" height="7" viewBox="0 0 12 7"><path d="M1 1 L11 1 L6.0 6 Z" fill="#6e6e6e" stroke="#c6c6c6" stroke-width="0.9" stroke-linejoin="miter"/></svg>
<div style="left:692px;top:883px;width:172px;height:24px;background:#565656;border-top:1px solid #4c4c4c;border-left:1px solid #4c4c4c;border-bottom:1px solid #8c8c8c;border-right:1px solid #8c8c8c;"></div>
<div class="t" style="top:885.00px;height:20px;line-height:20px;font-size:11.5px;color:#7e7e7e;left:696px;letter-spacing:-0.53px;">8899</div>
<div style="left:383px;top:931px;width:12px;height:12px;background:#00d000;border-bottom:1px solid #7a7a7a;border-right:1px solid #7a7a7a;"></div>
<div class="t" style="top:927.00px;height:20px;line-height:20px;font-size:11.5px;color:#d6d6d6;left:403px;letter-spacing:-0.40px;">Pause</div>
<div style="left:473px;top:923px;width:150px;height:28.5px;background:#5a5a5a;box-shadow:0 0 0 1px #4a4a4a;"></div>
<div class="t" style="top:927.00px;height:20px;line-height:20px;font-size:11.5px;color:#7e7e7e;left:248.07px;width:600px;text-align:center;letter-spacing:0.13px;">Clear All Actors</div>
<div style="left:746px;top:923px;width:122px;height:28.5px;background:#5a5a5a;box-shadow:0 0 0 1px #4a4a4a;"></div>
<div class="t" style="top:927.00px;height:20px;line-height:20px;font-size:11.5px;color:#d6d6d6;left:749px;letter-spacing:0.11px;">All</div>
<svg style="left:855px;top:935px;" width="12" height="7" viewBox="0 0 12 7"><path d="M1 1 L11 1 L6.0 6 Z" fill="#6e6e6e" stroke="#c6c6c6" stroke-width="0.9" stroke-linejoin="miter"/></svg>
<div class="grip" style="left:1276px;top:687px;width:54px;"></div>
<div class="t" style="top:681.00px;height:20px;line-height:20px;font-size:11.5px;color:#d0d0d0;left:1071.01px;width:600px;text-align:center;letter-spacing:0.01px;">Key Controls</div>
<div class="grip" style="left:1414px;top:687px;width:54px;"></div>
<svg style="left:1471px;top:680.5px;" width="19" height="19" viewBox="0 0 19 19"><rect x="0.5" y="0.5" width="18" height="18.2" rx="3.5" fill="#484848" stroke="#2c2c2c"/><rect x="8" y="3.5" width="7.5" height="7.5" fill="#404040" stroke="#3a3a3a" stroke-width="1.6"/><rect x="4" y="7.5" width="8.5" height="8" fill="#484848" stroke="#3a3a3a" stroke-width="2"/></svg>
<svg style="left:1492px;top:680.5px;" width="19" height="19" viewBox="0 0 19 19"><rect x="0.5" y="0.5" width="18" height="18.2" rx="3.5" fill="#484848" stroke="#2c2c2c"/><path d="M4.5 4.5 L14.5 14.5 M14.5 4.5 L4.5 14.5" stroke="#3a3a3a" stroke-width="2.4" fill="none"/></svg>
<div style="left:1275px;top:710px;width:105px;height:16px;background:#5a5a5a;box-shadow:0 0 0 1px #4a4a4a;"></div>
<svg style="left:1277.5px;top:716px;" width="12" height="7" viewBox="0 0 12 7"><path d="M1 1 L11 1 L6.0 6 Z" fill="#8e8e8e" stroke="#1e1e1e" stroke-width="0.9" stroke-linejoin="miter"/></svg>
<div class="t" style="top:708.00px;height:20px;line-height:20px;font-size:11.5px;color:#d2d2d2;left:1304.3px;letter-spacing:0.41px;">Animation</div>
<div class="t" style="top:709.00px;height:20px;line-height:20px;font-size:11.5px;color:#d2d2d2;left:1390.3px;letter-spacing:-0.19px;">Type :</div>
<div style="left:1426px;top:710px;width:75px;height:16px;background:#5a5a5a;box-shadow:0 0 0 1px #4a4a4a;"></div>
<div class="t" style="top:708.00px;height:20px;line-height:20px;font-size:11.5px;color:#d2d2d2;left:1429.1px;letter-spacing:0.61px;">Auto</div>
<svg style="left:1487.5px;top:716px;" width="12" height="7" viewBox="0 0 12 7"><path d="M1 1 L11 1 L6.0 6 Z" fill="#6e6e6e" stroke="#c6c6c6" stroke-width="0.9" stroke-linejoin="miter"/></svg>
<div style="left:1275px;top:732px;width:105px;height:16px;background:#5a5a5a;box-shadow:0 0 0 1px #4a4a4a;"></div>
<div class="t" style="top:730.00px;height:20px;line-height:20px;font-size:11.5px;color:#d2d2d2;left:1278.5px;letter-spacing:0.10px;">BaseAnimation</div>
<svg style="left:1366.5px;top:738px;" width="12" height="7" viewBox="0 0 12 7"><path d="M1 1 L11 1 L6.0 6 Z" fill="#6e6e6e" stroke="#c6c6c6" stroke-width="0.9" stroke-linejoin="miter"/></svg>
<div style="left:1387px;top:732px;width:25px;height:16px;background:#5a5a5a;box-shadow:0 0 0 1px #4a4a4a;"></div>
<svg style="left:1387px;top:732px;" width="25" height="16" viewBox="0 0 25 16"><path d="M1 8 L13 1.5 V14.5 Z" fill="#e2e2e2"/><circle cx="19.5" cy="8.3" r="3.4" fill="#b4b4b4"/></svg>
<div style="left:1414px;top:732px;width:33px;height:16px;background:#5a5a5a;box-shadow:0 0 0 1px #4a4a4a;"></div>
<div class="t" style="top:730.00px;height:20px;line-height:20px;font-size:11.5px;color:#808080;left:1421.4px;letter-spacing:-0.76px;">Key</div>
<div style="left:1449px;top:732px;width:26px;height:16px;background:#5a5a5a;box-shadow:0 0 0 1px #4a4a4a;"></div>
<svg style="left:1449px;top:732px;" width="26" height="16" viewBox="0 0 26 16"><circle cx="6.3" cy="8.3" r="3.4" fill="#b4b4b4"/><path d="M25 8 L13 1.5 V14.5 Z" fill="#e2e2e2"/></svg>
<div style="left:1480px;top:732px;width:21px;height:16px;background:#5a5a5a;box-shadow:0 0 0 1px #4a4a4a;"></div>
<svg style="left:1484.5px;top:734.5px;" width="11" height="11" viewBox="0 0 11 11"><path d="M1.5 1.5 L9.5 9.5 M9.5 1.5 L1.5 9.5" stroke="#f4f4f4" stroke-width="2.6"/></svg>
<div style="left:1275px;top:754px;width:105px;height:16px;background:#5a5a5a;box-shadow:0 0 0 1px #4a4a4a;"></div>
<div class="t" style="top:752.00px;height:20px;line-height:20px;font-size:11.5px;color:#d2d2d2;left:1278.5px;letter-spacing:-1.00px;">TR</div>
<svg style="left:1366.5px;top:760px;" width="12" height="7" viewBox="0 0 12 7"><path d="M1 1 L11 1 L6.0 6 Z" fill="#6e6e6e" stroke="#c6c6c6" stroke-width="0.9" stroke-linejoin="miter"/></svg>
<div style="left:1387px;top:754px;width:36px;height:16px;background:#5a5a5a;box-shadow:0 0 0 1px #4a4a4a;"></div>
<div class="t" style="top:752.00px;height:20px;line-height:20px;font-size:11.5px;color:#d8d8d8;left:1393px;letter-spacing:0.01px;">Zero</div>
<div style="left:1426px;top:754px;width:36px;height:16px;background:#5a5a5a;box-shadow:0 0 0 1px #4a4a4a;"></div>
<div class="t" style="top:752.00px;height:20px;line-height:20px;font-size:11.5px;color:#d8d8d8;left:1434.3px;letter-spacing:-0.09px;">Flat</div>
<div style="left:1465px;top:754px;width:36px;height:16px;background:#5a5a5a;box-shadow:0 0 0 1px #4a4a4a;"></div>
<div class="t" style="top:752.00px;height:20px;line-height:20px;font-size:11.5px;color:#d8d8d8;left:1470.4px;letter-spacing:-0.37px;">Disc.</div>
<div style="left:1275px;top:778px;width:34px;height:15px;background:#5a5a5a;box-shadow:0 0 0 1px #4a4a4a;"></div>
<svg style="left:1280px;top:780px;" width="24" height="12" viewBox="0 0 24 12"><ellipse cx="5" cy="5.5" rx="4" ry="3" fill="#4a4a4a" stroke="#e0c040" stroke-width="1.3"/><ellipse cx="5" cy="5.5" rx="4.6" ry="3.6" fill="none" stroke="#2a2200" stroke-width="0.5"/><path d="M9 5.5 H21.5" stroke="#e0c878" stroke-width="1.6"/><path d="M16.5 6 V9 M19.5 6 V9" stroke="#c0a040" stroke-width="1.3"/></svg>
<div style="left:1316px;top:778px;width:64px;height:15px;background:#5a5a5a;box-shadow:0 0 0 1px #4a4a4a;"></div>
<div class="t" style="top:776.00px;height:20px;line-height:20px;font-size:11.5px;color:#d8d8d8;left:1319.4px;letter-spacing:-0.04px;">Move Keys</div>
<div style="left:1387px;top:778px;width:27px;height:15px;background:#5a5a5a;box-shadow:0 0 0 1px #4a4a4a;"></div>
<div class="t" style="top:776.00px;height:20px;line-height:20px;font-size:11.5px;color:#808080;left:1393.4px;letter-spacing:-1.00px;">FK</div>
<div style="left:1416px;top:778px;width:27px;height:15px;background:#5a5a5a;box-shadow:0 0 0 1px #4a4a4a;"></div>
<div class="t" style="top:776.00px;height:20px;line-height:20px;font-size:11.5px;color:#808080;left:1424.5px;letter-spacing:-1.00px;">IK</div>
<div style="left:1446px;top:778px;width:48px;height:15px;background:#5a5a5a;box-shadow:0 0 0 1px #4a4a4a;"></div>
<div class="t" style="top:776.00px;height:20px;line-height:20px;font-size:11.5px;color:#808080;left:1448px;letter-spacing:0.05px;">Sync. All</div>
<div style="left:1495px;top:778px;width:7px;height:15px;background:#626262;box-shadow:0 0 0 1px #4a4a4a;"></div>
<svg style="left:1495.5px;top:788px;" width="6" height="4" viewBox="0 0 6 4"><path d="M0.5 0.5 H5.5 L3 3.5 Z" fill="#f0f0f0"/></svg>
<div class="t" style="top:797.00px;height:20px;line-height:20px;font-size:11.5px;color:#d2d2d2;left:1283.3px;letter-spacing:-0.50px;">Ref.:</div>
<div style="left:1316px;top:799px;width:185px;height:16px;background:#575757;box-shadow:0 0 0 1px #4a4a4a;"></div>
<svg style="left:1487.5px;top:805px;" width="12" height="7" viewBox="0 0 12 7"><path d="M1 1 L11 1 L6.0 6 Z" fill="#5c5c5c" stroke="#505050" stroke-width="0.9" stroke-linejoin="miter"/></svg>
<div class="vgrip" style="left:1268px;top:796px;height:112px;"></div>
<div class="vgrip" style="left:1514px;top:796px;height:112px;"></div>
<div style="left:1352px;top:862px;width:77px;height:3px;background-image:linear-gradient(90deg,transparent 1px,#626262 1px,#626262 3px,transparent 3px),linear-gradient(90deg,#3a3a3a 2px,transparent 2px);background-size:5px 2px,5px 2px;background-repeat:repeat-x;background-position:0 1px,0 0;"></div>
<div class="grip" style="left:1276px;top:876px;width:41px;"></div>
<div class="t" style="top:869.00px;height:20px;line-height:20px;font-size:11.5px;color:#d0d0d0;left:1071.55px;width:600px;text-align:center;letter-spacing:0.10px;">Animation Layers</div>
<div class="grip" style="left:1426px;top:876px;width:41px;"></div>
<svg style="left:1471px;top:868.5px;" width="19" height="19" viewBox="0 0 19 19"><rect x="0.5" y="0.5" width="18" height="18.2" rx="3.5" fill="#484848" stroke="#2c2c2c"/><rect x="8" y="3.5" width="7.5" height="7.5" fill="#404040" stroke="#3a3a3a" stroke-width="1.6"/><rect x="4" y="7.5" width="8.5" height="8" fill="#484848" stroke="#3a3a3a" stroke-width="2"/></svg>
<svg style="left:1492px;top:868.5px;" width="19" height="19" viewBox="0 0 19 19"><rect x="0.5" y="0.5" width="18" height="18.2" rx="3.5" fill="#484848" stroke="#2c2c2c"/><path d="M4.5 4.5 L14.5 14.5 M14.5 4.5 L4.5 14.5" stroke="#3a3a3a" stroke-width="2.4" fill="none"/></svg>
<svg style="left:1278px;top:897px;" width="18" height="18" viewBox="0 0 18 18"><path d="M0 4 L8 1 L15 4 L7 7.5 Z" fill="#f0f0f0" stroke="#8a8a8a" stroke-width="0.5"/><path d="M1 5.2 L7.5 8.4 V9.6 L1 6.4 Z" fill="#9a9a9a"/><path d="M8 11.5 H16 M12 7.5 V15.5" stroke="#0a6a0a" stroke-width="3.4"/><path d="M8.6 11.5 H15.4 M12 8.1 V14.9" stroke="#20e020" stroke-width="1.8"/></svg>
<svg style="left:1303px;top:897px;" width="18" height="18" viewBox="0 0 18 18"><path d="M1 10 L9 7 L16 10 L8 13.5 Z" fill="#f4f4f4" stroke="#8a8a8a" stroke-width="0.5"/><path d="M1 4.5 L9 1.5 L16 4.5 L8 8.0 Z" fill="#a8d0f0" stroke="#6a9ac0" stroke-width="0.5"/></svg>
<svg style="left:1328px;top:896px;" width="16" height="19" viewBox="0 0 16 19"><ellipse cx="7" cy="16.5" rx="6.5" ry="1.8" fill="#2a2a2a"/><path d="M4 5 H12.5 L11.6 16 H4.9 Z" fill="#7a7a7a" stroke="#3a3a3a" stroke-width="0.7"/><path d="M6.3 6.5 V14.5 M8.2 6.5 V14.5 M10.1 6.5 V14.5" stroke="#c8c8c8" stroke-width="0.8"/><ellipse cx="8.2" cy="4.6" rx="4.8" ry="1.5" fill="#a8a8a8" stroke="#3a3a3a" stroke-width="0.7"/><rect x="7" y="1.8" width="2.4" height="1.6" fill="#8a8a8a"/></svg>
<svg style="left:1352px;top:896px;" width="18" height="19" viewBox="0 0 18 19"><path d="M8.5 0.5 V7" stroke="#e8e8e8" stroke-width="1.4"/><path d="M5.5 5.5 H11.5 L8.5 9.5 Z" fill="#e8e8e8"/><path d="M1 11 L9 8 L16 11 L8 14.5 Z" fill="#dcdcdc" stroke="#8a8a8a" stroke-width="0.5"/><path d="M1 14 L9 11 L16 14 L8 17.5 Z" fill="#f0f0f0" stroke="#8a8a8a" stroke-width="0.5"/></svg>
<svg style="left:1376px;top:896px;" width="20" height="19" viewBox="0 0 20 19"><path d="M4 5 L12 2 L19 5 L11 8.5 Z" fill="#f4f4f4" stroke="#8a8a8a" stroke-width="0.5"/><path d="M4 8 L12 5 L19 8 L11 11.5 Z" fill="#e4e4e4" stroke="#8a8a8a" stroke-width="0.5"/><path d="M4 11 L12 8 L19 11 L11 14.5 Z" fill="#d8d8d8" stroke="#8a8a8a" stroke-width="0.5"/><path d="M4 14 L12 11 L19 14 L11 17.5 Z" fill="#ececec" stroke="#8a8a8a" stroke-width="0.5"/><path d="M2.5 16 V3" stroke="#e8e8e8" stroke-width="1.3"/><path d="M0 5.5 L2.5 1 L5 5.5 Z" fill="#e8e8e8"/></svg>
<svg style="left:1396px;top:896px;" width="20" height="19" viewBox="0 0 20 19"><path d="M4 5 L12 2 L19 5 L11 8.5 Z" fill="#f4f4f4" stroke="#8a8a8a" stroke-width="0.5"/><path d="M4 8 L12 5 L19 8 L11 11.5 Z" fill="#e4e4e4" stroke="#8a8a8a" stroke-width="0.5"/><path d="M4 11 L12 8 L19 11 L11 14.5 Z" fill="#d8d8d8" stroke="#8a8a8a" stroke-width="0.5"/><path d="M4 14 L12 11 L19 14 L11 17.5 Z" fill="#ececec" stroke="#8a8a8a" stroke-width="0.5"/><path d="M2.5 2 V15" stroke="#e8e8e8" stroke-width="1.3"/><path d="M0 12.5 L2.5 17 L5 12.5 Z" fill="#e8e8e8"/></svg>
<svg style="left:1481px;top:900px;shape-rendering:crispEdges;" width="17" height="12" viewBox="0 0 17 12"><path d="M0 1.5 H10 M12 1.5 H16 M0 6 H10 M12 6 H16 M0 10.5 H10 M12 10.5 H16" stroke="#e4e4e4" stroke-width="1.2"/></svg>
<div style="left:1276px;top:920px;width:215px;height:92px;background:#878787;border-bottom:1px solid #9a9a9a;border-top:1px solid #5a5a5a;"></div>
<div style="left:1276px;top:920px;width:215px;height:24px;background:#a4a4a4;border-bottom:1px solid #6e6e6e;border-top:1px solid #b4b4b4;"></div>
<div style="left:1276px;top:920px;width:10px;height:23px;background:#dcd86c;"></div>
<div style="left:1276px;top:944px;width:215px;height:24px;background:linear-gradient(#6b96c6,#5a84b3);border-bottom:1px solid #3e5c80;"></div>
<div style="left:1276px;top:944px;width:10px;height:23px;background:#9a0028;"></div>
<div class="t" style="top:923.00px;height:20px;line-height:20px;font-size:10.5px;color:#0a0a0a;left:1307.4px;letter-spacing:-0.26px;font-family:'DejaVu Sans','Liberation Sans',sans-serif;">AnimLayer1</div>
<div class="t" style="top:947.00px;height:20px;line-height:20px;font-size:10.5px;color:#0a0a0a;left:1307.4px;letter-spacing:-0.13px;font-family:'DejaVu Sans','Liberation Sans',sans-serif;">BaseAnimation</div>
<svg style="left:1431px;top:924px;" width="16" height="16" viewBox="0 0 16 16"><rect x="0" y="0" width="16" height="16" fill="#5c5c5c" stroke="#4a4a4a" stroke-width="1"/><path d="M3.2 7 V5 A2.6 2.6 0 0 1 8.4 5 V5.6" fill="none" stroke="#e8c020" stroke-width="1.5"/><rect x="5" y="7" width="9" height="6.5" rx="0.8" fill="#d8b018" stroke="#5a4800" stroke-width="0.8"/><rect x="8.8" y="9" width="1.6" height="3" fill="#1a1400"/></svg>
<svg style="left:1451px;top:924px;" width="16" height="16" viewBox="0 0 16 16"><defs><linearGradient id="on0" x1="0" y1="0" x2="1" y2="0"><stop offset="0" stop-color="#4e4e4e"/><stop offset="0.35" stop-color="#8a8a8a"/><stop offset="0.4" stop-color="#f4f4f4"/><stop offset="1" stop-color="#f4f4f4"/></linearGradient></defs><rect x="0" y="0" width="16" height="16" fill="#5c5c5c" stroke="#4a4a4a" stroke-width="1"/><rect x="2" y="1.5" width="12.5" height="13" fill="url(#on0)"/><text x="10" y="12.6" font-size="11" font-weight="bold" fill="#1a1a1a" text-anchor="middle" font-family="Liberation Sans,sans-serif">1</text></svg>
<svg style="left:1471px;top:924px;" width="16" height="16" viewBox="0 0 16 16"><rect x="0" y="0" width="16" height="16" fill="#5c5c5c" stroke="#4a4a4a" stroke-width="1"/><circle cx="8" cy="8" r="5.2" fill="none" stroke="#e02020" stroke-width="1.4"/><path d="M4.4 11.6 L11.6 4.4" stroke="#e02020" stroke-width="1.4"/></svg>
<svg style="left:1431px;top:948px;" width="16" height="16" viewBox="0 0 16 16"><rect x="0" y="0" width="16" height="16" fill="#5c5c5c" stroke="#4a4a4a" stroke-width="1"/><path d="M3.2 7 V5 A2.6 2.6 0 0 1 8.4 5 V5.6" fill="none" stroke="#e8c020" stroke-width="1.5"/><rect x="5" y="7" width="9" height="6.5" rx="0.8" fill="#d8b018" stroke="#5a4800" stroke-width="0.8"/><rect x="8.8" y="9" width="1.6" height="3" fill="#1a1400"/></svg>
<svg style="left:1451px;top:948px;" width="16" height="16" viewBox="0 0 16 16"><defs><linearGradient id="on1" x1="0" y1="0" x2="1" y2="0"><stop offset="0" stop-color="#4e4e4e"/><stop offset="0.35" stop-color="#8a8a8a"/><stop offset="0.4" stop-color="#f4f4f4"/><stop offset="1" stop-color="#f4f4f4"/></linearGradient></defs><rect x="0" y="0" width="16" height="16" fill="#5c5c5c" stroke="#4a4a4a" stroke-width="1"/><rect x="2" y="1.5" width="12.5" height="13" fill="url(#on1)"/><text x="10" y="12.6" font-size="11" font-weight="bold" fill="#f8f8f8" text-anchor="middle" font-family="Liberation Sans,sans-serif">1</text></svg>
<svg style="left:1471px;top:948px;" width="16" height="16" viewBox="0 0 16 16"><rect x="0" y="0" width="16" height="16" fill="#5c5c5c" stroke="#4a4a4a" stroke-width="1"/><circle cx="8" cy="8" r="5.2" fill="none" stroke="#e8e8e8" stroke-width="1.4"/><path d="M4.4 11.6 L11.6 4.4" stroke="#e8e8e8" stroke-width="1.4"/></svg>
<div style="left:1492px;top:920px;width:16px;height:92px;background:#606060;border:1px solid #8a8a8a;"></div>
<div style="left:1492px;top:920px;width:16px;height:16px;background:#5c5c5c;border:1px solid #8a8a8a;"></div>
<svg style="left:1495px;top:924px;" width="10" height="7" viewBox="0 0 10 7"><path d="M0.8 6 L5 1 L9.2 6 Z" fill="#5c5c5c" stroke="#d0d0d0" stroke-width="0.9"/></svg>
<div style="left:1492px;top:936px;width:16px;height:50px;background:#5e5e5e;border:1px solid #7a7a7a;"></div>
<svg style="left:1495px;top:956px;shape-rendering:crispEdges;" width="10" height="9" viewBox="0 0 10 9"><path d="M0 1 H10 M0 3.5 H10 M0 6 H10 M0 8.5 H10" stroke="#e0e0e0" stroke-width="1"/></svg>
<div style="left:1492px;top:986px;width:16px;height:10px;background:#262626;"></div>
<div style="left:1492px;top:996px;width:16px;height:16px;background:#5c5c5c;border:1px solid #8a8a8a;"></div>
<svg style="left:1495px;top:1001px;" width="10" height="7" viewBox="0 0 10 7"><path d="M0.8 1 L5 6 L9.2 1 Z" fill="#5c5c5c" stroke="#d0d0d0" stroke-width="0.9"/></svg>
<div class="t" style="top:1013.00px;height:20px;line-height:20px;font-size:11.5px;color:#d2d2d2;left:1280px;letter-spacing:0.44px;">Weight</div>
<div style="left:1323px;top:1016px;width:16px;height:15px;background:#d4d4d4;border:1px solid #8a8a8a;"></div>
<div class="t" style="top:1013.00px;height:20px;line-height:20px;font-size:11.5px;color:#a0a0a0;left:1031.00px;width:600px;text-align:center;">K</div>
<div style="left:1341px;top:1016px;width:81px;height:15px;background:#555555;border-top:1px solid #4c4c4c;border-left:1px solid #4c4c4c;border-bottom:1px solid #8c8c8c;border-right:1px solid #8c8c8c;"></div>
<div style="left:1406px;top:1017px;width:15px;height:13px;background:#5a5a5a;border:1px solid #7e7e7e;"></div>
<div style="left:1423px;top:1016px;width:66px;height:15px;background:#5a5a5a;border-top:1px solid #4c4c4c;border-left:1px solid #4c4c4c;border-bottom:1px solid #8c8c8c;border-right:1px solid #8c8c8c;"></div>
<div class="t" style="top:1013.00px;height:20px;line-height:20px;font-size:11.5px;color:#7a7a7a;left:1440px;letter-spacing:-0.70px;">100.00</div>
<div style="left:1491px;top:1016px;width:16px;height:15px;background:#6a6a6a;border:1px solid #8a8a8a;"></div>
<div class="t" style="top:1013.00px;height:20px;line-height:20px;font-size:11.5px;color:#808080;left:1199.00px;width:600px;text-align:center;">A</div>
<div class="grip" style="left:1521px;top:687px;width:142px;"></div>
<div class="t" style="top:681.00px;height:20px;line-height:20px;font-size:11.5px;color:#d0d0d0;left:1398.65px;width:600px;text-align:center;letter-spacing:-0.30px;">Resources</div>
<div class="grip" style="left:1733px;top:687px;width:142px;"></div>
<svg style="left:1879px;top:680.5px;" width="19" height="19" viewBox="0 0 19 19"><rect x="0.5" y="0.5" width="18" height="18.2" rx="3.5" fill="#484848" stroke="#2c2c2c"/><rect x="8" y="3.5" width="7.5" height="7.5" fill="#404040" stroke="#3a3a3a" stroke-width="1.6"/><rect x="4" y="7.5" width="8.5" height="8" fill="#484848" stroke="#3a3a3a" stroke-width="2"/></svg>
<svg style="left:1900px;top:680.5px;" width="19" height="19" viewBox="0 0 19 19"><rect x="0.5" y="0.5" width="18" height="18.2" rx="3.5" fill="#484848" stroke="#2c2c2c"/><path d="M4.5 4.5 L14.5 14.5 M14.5 4.5 L4.5 14.5" stroke="#3a3a3a" stroke-width="2.4" fill="none"/></svg>
<div style="left:1517px;top:725px;width:403px;height:3px;background:#787878;border-top:1px solid #7e7e7e;border-bottom:1px solid #5a5a5a;"></div>
<div style="left:1518px;top:707px;width:91px;height:19px;background:#3b3b3b;border:1px solid #8a8a8a;border-bottom:none;border-radius:4px 4px 0 0;"></div>
<div class="t" style="top:707.00px;height:20px;line-height:20px;font-size:11.5px;color:#dadada;left:1528.5px;letter-spacing:-0.03px;">Pose Controls</div>
<div style="left:1611px;top:707px;width:71px;height:19px;background:#3b3b3b;border:1px solid #8a8a8a;border-bottom:none;border-radius:4px 4px 0 0;"></div>
<div class="t" style="top:707.00px;height:20px;line-height:20px;font-size:11.5px;color:#dadada;left:1620.7px;letter-spacing:0.02px;">Properties</div>
<div style="left:1684px;top:707px;width:50px;height:19px;background:#3b3b3b;border:1px solid #8a8a8a;border-bottom:none;border-radius:4px 4px 0 0;"></div>
<div class="t" style="top:707.00px;height:20px;line-height:20px;font-size:11.5px;color:#dadada;left:1693.4px;letter-spacing:-0.15px;">Filters</div>
<div style="left:1735px;top:705px;width:91px;height:22px;background:#5a5a5a;border:1px solid #747474;border-bottom:none;border-radius:4px 4px 0 0;"></div>
<div class="t" style="top:706.00px;height:20px;line-height:20px;font-size:11.5px;color:#d6d6d6;left:1744.4px;letter-spacing:-0.15px;">Asset Browser</div>
<div style="left:1828px;top:707px;width:56px;height:19px;background:#3b3b3b;border:1px solid #8a8a8a;border-bottom:none;border-radius:4px 4px 0 0;"></div>
<div class="t" style="top:707.00px;height:20px;line-height:20px;font-size:11.5px;color:#dadada;left:1837px;letter-spacing:0.02px;">Groups</div>
<div style="left:1886px;top:707px;width:40px;height:19px;background:#3b3b3b;border:1px solid #8a8a8a;border-bottom:none;border-radius:4px 4px 0 0;"></div>
<div class="t" style="top:707.00px;height:20px;line-height:20px;font-size:11.5px;color:#dadada;left:1895px;letter-spacing:-0.77px;">Sets</div>
<svg style="left:1531px;top:735px;shape-rendering:crispEdges;" width="18" height="16" viewBox="0 0 18 16"><rect x="0.5" y="0.5" width="3.5" height="3.5" fill="#6a9ad0"/><path d="M2.2 4 V13.5 H6 M2.2 7.5 H6" stroke="#7a7a7a" stroke-width="1" fill="none"/><rect x="6.5" y="5.8" width="3.2" height="3.2" fill="#f0f0f0"/><rect x="6.5" y="11.8" width="3.2" height="3.2" fill="#f0f0f0"/><path d="M10 2 H15 M11.5 7.5 H17 M11.5 13.5 H17" stroke="#e0e0e0" stroke-width="1.1"/></svg>
<div style="left:1553px;top:732px;width:29px;height:22px;background:#282828;"></div>
<svg style="left:1560px;top:736px;" width="15" height="15" viewBox="0 0 15 15"><defs><linearGradient id="c1" x1="0" y1="0" x2="1" y2="0"><stop offset="0" stop-color="#c8c8c8"/><stop offset="1" stop-color="#f8f8f8"/></linearGradient></defs><rect x="1" y="1" width="6" height="13" fill="url(#c1)"/><rect x="8" y="1" width="6" height="13" fill="#6a9ad0"/></svg>
<svg style="left:1589px;top:736px;" width="15" height="15" viewBox="0 0 15 15"><defs><linearGradient id="c2" x1="0" y1="0" x2="0" y2="1"><stop offset="0" stop-color="#d8d8d8"/><stop offset="1" stop-color="#fafafa"/></linearGradient></defs><rect x="0.5" y="0.5" width="14" height="14" rx="1" fill="#3a3a3a"/><rect x="1" y="1" width="13" height="6" fill="url(#c2)"/><rect x="1" y="8" width="13" height="6" fill="#6a9ad0"/></svg>
<div style="left:1621px;top:732px;width:29px;height:22px;background:#282828;"></div>
<svg style="left:1628px;top:736px;shape-rendering:crispEdges;" width="17" height="14" viewBox="0 0 17 14"><rect x="0.5" y="0" width="2.2" height="2.2" fill="#6aa8e8"/><rect x="0.5" y="5" width="2.2" height="2.2" fill="#f4f4f4"/><rect x="0.5" y="10" width="2.2" height="2.2" fill="#6aa8e8"/><path d="M5.5 1.2 H16 M5.5 6.2 H16 M5.5 11.2 H16" stroke="#f0f0f0" stroke-width="1.2"/></svg>
<svg style="left:1657px;top:734px;" width="17" height="18" viewBox="0 0 17 18"><rect x="0.5" y="0.5" width="5.5" height="5" fill="#5a98dc" stroke="#8ab8e8" stroke-width="0.5"/><path d="M0.5 7.5 H6.0" stroke="#e0e0e0" stroke-width="1"/><rect x="0.5" y="9.5" width="5.5" height="5" fill="#5a98dc" stroke="#8ab8e8" stroke-width="0.5"/><path d="M0.5 16.5 H6.0" stroke="#e0e0e0" stroke-width="1"/><rect x="10" y="0.5" width="5.5" height="5" fill="#5a98dc" stroke="#8ab8e8" stroke-width="0.5"/><path d="M10 7.5 H15.5" stroke="#e0e0e0" stroke-width="1"/><rect x="10" y="9.5" width="5.5" height="5" fill="#5a98dc" stroke="#8ab8e8" stroke-width="0.5"/><path d="M10 16.5 H15.5" stroke="#e0e0e0" stroke-width="1"/></svg>
<svg style="left:1686px;top:736px;shape-rendering:crispEdges;" width="17" height="12" viewBox="0 0 17 12"><path d="M0 1.5 H10 M12 1.5 H16 M0 6 H10 M12 6 H16 M0 10.5 H10 M12 10.5 H16" stroke="#e4e4e4" stroke-width="1.2"/></svg>
<div style="left:1525px;top:759px;width:166px;height:270px;background:#282828;border-right:1px solid #6e6e6e;border-bottom:1px solid #6e6e6e;border-top:1px solid #1c1c1c;border-left:1px solid #1c1c1c;"></div>
<div style="left:1693px;top:759px;width:1px;height:270px;background:#2a2a2a;"></div>
<svg style="left:1545px;top:815px;shape-rendering:crispEdges;" width="20" height="140" viewBox="0 0 20 140"><path d="M4.5 3 V131.5 M4.5 11.5 H12 M4.5 26.5 H12 M4.5 41.5 H12 M4.5 56.5 H12 M4.5 71.5 H12 M4.5 131.5 H12" stroke="#0c0c0c" stroke-width="1" fill="none"/></svg>
<svg style="left:1542.5px;top:761.5px;" width="14" height="11" viewBox="0 0 14 11"><path d="M0.5 2 L1.5 0.5 H5 L6 2 H11 V4 H0.5 Z" fill="#b89a28"/><path d="M0.5 3.5 H10.5 V10 H0.5 Z" fill="#8a7418"/><path d="M2.8 4.5 H13.5 L11 10.2 H0.5 Z" fill="#f0dc78" stroke="#a88c20" stroke-width="0.6"/></svg>
<div class="t" style="top:757.00px;height:20px;line-height:20px;font-size:11.5px;color:#d6d6d6;left:1560.5px;letter-spacing:0.39px;">Motion_MB</div>
<svg style="left:1530px;top:776.5px;shape-rendering:crispEdges;" width="10" height="10" viewBox="0 0 10 10"><path d="M0 5 H10 M5 0 V10" stroke="#7c7c7c" stroke-width="1.6"/></svg>
<svg style="left:1542.5px;top:776.5px;" width="14" height="11" viewBox="0 0 14 11"><path d="M0.5 2 L1.5 0.5 H5 L6 2 H11 V4 H0.5 Z" fill="#b89a28"/><path d="M0.5 3.5 H10.5 V10 H0.5 Z" fill="#8a7418"/><path d="M2.8 4.5 H13.5 L11 10.2 H0.5 Z" fill="#f0dc78" stroke="#a88c20" stroke-width="0.6"/></svg>
<div class="t" style="top:772.00px;height:20px;line-height:20px;font-size:11.5px;color:#d6d6d6;left:1560.5px;letter-spacing:-0.03px;">PrevisMoves</div>
<svg style="left:1530px;top:791.5px;shape-rendering:crispEdges;" width="10" height="10" viewBox="0 0 10 10"><path d="M0 5 H10 M5 0 V10" stroke="#7c7c7c" stroke-width="1.6"/></svg>
<svg style="left:1542.5px;top:791.5px;" width="14" height="11" viewBox="0 0 14 11"><path d="M0.5 2 L1.5 0.5 H5 L6 2 H11 V4 H0.5 Z" fill="#b89a28"/><path d="M0.5 3.5 H10.5 V10 H0.5 Z" fill="#8a7418"/><path d="M2.8 4.5 H13.5 L11 10.2 H0.5 Z" fill="#f0dc78" stroke="#a88c20" stroke-width="0.6"/></svg>
<div class="t" style="top:787.00px;height:20px;line-height:20px;font-size:11.5px;color:#d6d6d6;left:1560.5px;letter-spacing:-0.16px;">Scripts</div>
<svg style="left:1530px;top:810.5px;shape-rendering:crispEdges;" width="10" height="2" viewBox="0 0 10 2"><path d="M0 1 H10" stroke="#7c7c7c" stroke-width="1.6"/></svg>
<svg style="left:1542px;top:803.5px;" width="16" height="16" viewBox="0 0 16 16"><ellipse cx="4.3" cy="5.3" rx="3.5" ry="4.7" fill="url(#fcL)"/><ellipse cx="11.2" cy="4.9" rx="3.3" ry="4.5" fill="url(#fcR)"/><path d="M8 4.4 Q11.8 4.4 11.6 9 Q11.2 13 8.8 15.2 H7.3 Q4.6 13 4.4 9 Q4.2 4.4 8 4.4 Z" fill="url(#fcF)"/><path d="M6 8.6 H7.4 M8.8 8.6 H10.2 M7.2 12 H8.9" stroke="#5a3a24" stroke-width="0.6"/></svg>
<div class="t" style="top:802.00px;height:20px;line-height:20px;font-size:11.5px;color:#d6d6d6;left:1560.5px;letter-spacing:-0.24px;">Templates</div>
<div style="left:1542px;top:819px;width:89px;height:15px;border:1px solid #5a8cc8;"></div>
<svg style="left:1557px;top:818.5px;" width="16" height="16" viewBox="0 0 16 16"><ellipse cx="4.3" cy="5.3" rx="3.5" ry="4.7" fill="url(#fcL)"/><ellipse cx="11.2" cy="4.9" rx="3.3" ry="4.5" fill="url(#fcR)"/><path d="M8 4.4 Q11.8 4.4 11.6 9 Q11.2 13 8.8 15.2 H7.3 Q4.6 13 4.4 9 Q4.2 4.4 8 4.4 Z" fill="url(#fcF)"/><path d="M6 8.6 H7.4 M8.8 8.6 H10.2 M7.2 12 H8.9" stroke="#5a3a24" stroke-width="0.6"/></svg>
<div class="t" style="top:817.00px;height:20px;line-height:20px;font-size:11.5px;color:#6a9ad0;left:1575px;letter-spacing:-0.14px;">Characters</div>
<svg style="left:1557px;top:833.5px;" width="16" height="16" viewBox="0 0 16 16"><ellipse cx="4.3" cy="5.3" rx="3.5" ry="4.7" fill="url(#fcL)"/><ellipse cx="11.2" cy="4.9" rx="3.3" ry="4.5" fill="url(#fcR)"/><path d="M8 4.4 Q11.8 4.4 11.6 9 Q11.2 13 8.8 15.2 H7.3 Q4.6 13 4.4 9 Q4.2 4.4 8 4.4 Z" fill="url(#fcF)"/><path d="M6 8.6 H7.4 M8.8 8.6 H10.2 M7.2 12 H8.9" stroke="#5a3a24" stroke-width="0.6"/></svg>
<div class="t" style="top:832.00px;height:20px;line-height:20px;font-size:11.5px;color:#d6d6d6;left:1575px;letter-spacing:0.03px;">Commands</div>
<svg style="left:1557px;top:848.5px;" width="16" height="16" viewBox="0 0 16 16"><ellipse cx="4.3" cy="5.3" rx="3.5" ry="4.7" fill="url(#fcL)"/><ellipse cx="11.2" cy="4.9" rx="3.3" ry="4.5" fill="url(#fcR)"/><path d="M8 4.4 Q11.8 4.4 11.6 9 Q11.2 13 8.8 15.2 H7.3 Q4.6 13 4.4 9 Q4.2 4.4 8 4.4 Z" fill="url(#fcF)"/><path d="M6 8.6 H7.4 M8.8 8.6 H10.2 M7.2 12 H8.9" stroke="#5a3a24" stroke-width="0.6"/></svg>
<div class="t" style="top:847.00px;height:20px;line-height:20px;font-size:11.5px;color:#d6d6d6;left:1575px;letter-spacing:0.08px;">Constraints</div>
<svg style="left:1557px;top:863.5px;" width="16" height="16" viewBox="0 0 16 16"><ellipse cx="4.3" cy="5.3" rx="3.5" ry="4.7" fill="url(#fcL)"/><ellipse cx="11.2" cy="4.9" rx="3.3" ry="4.5" fill="url(#fcR)"/><path d="M8 4.4 Q11.8 4.4 11.6 9 Q11.2 13 8.8 15.2 H7.3 Q4.6 13 4.4 9 Q4.2 4.4 8 4.4 Z" fill="url(#fcF)"/><path d="M6 8.6 H7.4 M8.8 8.6 H10.2 M7.2 12 H8.9" stroke="#5a3a24" stroke-width="0.6"/></svg>
<div class="t" style="top:862.00px;height:20px;line-height:20px;font-size:11.5px;color:#d6d6d6;left:1575px;letter-spacing:-0.24px;">Decks</div>
<div style="left:1573px;top:880px;width:117px;height:14px;background:#6690c4;"></div>
<svg style="left:1557px;top:878.5px;" width="16" height="16" viewBox="0 0 16 16"><ellipse cx="4.3" cy="5.3" rx="3.5" ry="4.7" fill="url(#fcL)"/><ellipse cx="11.2" cy="4.9" rx="3.3" ry="4.5" fill="url(#fcR)"/><path d="M8 4.4 Q11.8 4.4 11.6 9 Q11.2 13 8.8 15.2 H7.3 Q4.6 13 4.4 9 Q4.2 4.4 8 4.4 Z" fill="url(#fcF)"/><path d="M6 8.6 H7.4 M8.8 8.6 H10.2 M7.2 12 H8.9" stroke="#5a3a24" stroke-width="0.6"/></svg>
<div class="t" style="top:877.00px;height:20px;line-height:20px;font-size:11.5px;color:#eef2f8;left:1575px;letter-spacing:-0.15px;">Devices</div>
<svg style="left:1545px;top:896.5px;shape-rendering:crispEdges;" width="10" height="10" viewBox="0 0 10 10"><path d="M0 5 H10 M5 0 V10" stroke="#7c7c7c" stroke-width="1.6"/></svg>
<svg style="left:1557px;top:893.5px;" width="16" height="16" viewBox="0 0 16 16"><ellipse cx="4.3" cy="5.3" rx="3.5" ry="4.7" fill="url(#fcL)"/><ellipse cx="11.2" cy="4.9" rx="3.3" ry="4.5" fill="url(#fcR)"/><path d="M8 4.4 Q11.8 4.4 11.6 9 Q11.2 13 8.8 15.2 H7.3 Q4.6 13 4.4 9 Q4.2 4.4 8 4.4 Z" fill="url(#fcF)"/><path d="M6 8.6 H7.4 M8.8 8.6 H10.2 M7.2 12 H8.9" stroke="#5a3a24" stroke-width="0.6"/></svg>
<div class="t" style="top:892.00px;height:20px;line-height:20px;font-size:11.5px;color:#d6d6d6;left:1575px;letter-spacing:-0.13px;">Elements</div>
<svg style="left:1545px;top:911.5px;shape-rendering:crispEdges;" width="10" height="10" viewBox="0 0 10 10"><path d="M0 5 H10 M5 0 V10" stroke="#7c7c7c" stroke-width="1.6"/></svg>
<svg style="left:1557px;top:908.5px;" width="16" height="16" viewBox="0 0 16 16"><ellipse cx="4.3" cy="5.3" rx="3.5" ry="4.7" fill="url(#fcL)"/><ellipse cx="11.2" cy="4.9" rx="3.3" ry="4.5" fill="url(#fcR)"/><path d="M8 4.4 Q11.8 4.4 11.6 9 Q11.2 13 8.8 15.2 H7.3 Q4.6 13 4.4 9 Q4.2 4.4 8 4.4 Z" fill="url(#fcF)"/><path d="M6 8.6 H7.4 M8.8 8.6 H10.2 M7.2 12 H8.9" stroke="#5a3a24" stroke-width="0.6"/></svg>
<div class="t" style="top:907.00px;height:20px;line-height:20px;font-size:11.5px;color:#d6d6d6;left:1575px;letter-spacing:0.03px;">Physical Properties</div>
<svg style="left:1545px;top:926.5px;shape-rendering:crispEdges;" width="10" height="10" viewBox="0 0 10 10"><path d="M0 5 H10 M5 0 V10" stroke="#7c7c7c" stroke-width="1.6"/></svg>
<svg style="left:1557px;top:923.5px;" width="16" height="16" viewBox="0 0 16 16"><ellipse cx="4.3" cy="5.3" rx="3.5" ry="4.7" fill="url(#fcL)"/><ellipse cx="11.2" cy="4.9" rx="3.3" ry="4.5" fill="url(#fcR)"/><path d="M8 4.4 Q11.8 4.4 11.6 9 Q11.2 13 8.8 15.2 H7.3 Q4.6 13 4.4 9 Q4.2 4.4 8 4.4 Z" fill="url(#fcF)"/><path d="M6 8.6 H7.4 M8.8 8.6 H10.2 M7.2 12 H8.9" stroke="#5a3a24" stroke-width="0.6"/></svg>
<div class="t" style="top:922.00px;height:20px;line-height:20px;font-size:11.5px;color:#d6d6d6;left:1575px;letter-spacing:-0.02px;">Shading Elements</div>
<svg style="left:1557px;top:938.5px;" width="16" height="16" viewBox="0 0 16 16"><ellipse cx="4.3" cy="5.3" rx="3.5" ry="4.7" fill="url(#fcL)"/><ellipse cx="11.2" cy="4.9" rx="3.3" ry="4.5" fill="url(#fcR)"/><path d="M8 4.4 Q11.8 4.4 11.6 9 Q11.2 13 8.8 15.2 H7.3 Q4.6 13 4.4 9 Q4.2 4.4 8 4.4 Z" fill="url(#fcF)"/><path d="M6 8.6 H7.4 M8.8 8.6 H10.2 M7.2 12 H8.9" stroke="#5a3a24" stroke-width="0.6"/></svg>
<div class="t" style="top:937.00px;height:20px;line-height:20px;font-size:11.5px;color:#d6d6d6;left:1575px;letter-spacing:-0.23px;">Solvers</div>
<svg style="left:1542.5px;top:956.5px;" width="14" height="11" viewBox="0 0 14 11"><path d="M0.5 2 L1.5 0.5 H5 L6 2 H11 V4 H0.5 Z" fill="#b89a28"/><path d="M0.5 3.5 H10.5 V10 H0.5 Z" fill="#8a7418"/><path d="M2.8 4.5 H13.5 L11 10.2 H0.5 Z" fill="#f0dc78" stroke="#a88c20" stroke-width="0.6"/></svg>
<div class="t" style="top:952.00px;height:20px;line-height:20px;font-size:11.5px;color:#d6d6d6;left:1560.5px;letter-spacing:-0.15px;">Tutorials</div>
<div style="left:1699px;top:759px;width:217px;height:270px;background:#282828;border-top:2px solid #111;border-left:2px solid #111;border-right:1px solid #6e6e6e;border-bottom:1px solid #6e6e6e;"></div>
<svg style="left:1715.5px;top:759px;" width="15" height="15" viewBox="0 0 15 15"><path d="M10.5 0 V6 M7.5 3 H13.5" stroke="#e8e8e8" stroke-width="1.3"/><rect x="1" y="7.5" width="11" height="5" fill="#e8e8e8"/><rect x="3" y="9" width="4" height="1.5" fill="#2a2a2a"/><path d="M9 12.5 V15" stroke="#e8e8e8" stroke-width="1.6"/></svg>
<div class="t" style="top:757.00px;height:20px;line-height:20px;font-size:11.5px;color:#d6d6d6;left:1734px;">General Purpose Interface</div>
<svg style="left:1715.5px;top:774px;" width="15" height="15" viewBox="0 0 15 15"><path d="M4 10 L8 2.5" stroke="#e8e8e8" stroke-width="1.8"/><circle cx="9" cy="2.5" r="2.2" fill="#e8e8e8"/><path d="M2 8.5 H12.5 L14 12.5 H1 Z" fill="#e8e8e8"/><rect x="5" y="9.5" width="5" height="1.5" fill="#2a2a2a"/></svg>
<div class="t" style="top:772.00px;height:20px;line-height:20px;font-size:11.5px;color:#d6d6d6;left:1734px;letter-spacing:0.01px;">Joystick</div>
<svg style="left:1715.5px;top:789px;" width="15" height="15" viewBox="0 0 15 15"><path d="M4 3 Q8 0 11 3" stroke="#e8e8e8" stroke-width="1" fill="none"/><path d="M2.5 6 H12.5 L14.5 13.5 H0.5 Z" fill="#e8e8e8"/><path d="M3 8.5 H12 M2.5 10.5 H12.5" stroke="#2a2a2a" stroke-width="1" stroke-dasharray="1.4 1"/></svg>
<div class="t" style="top:787.00px;height:20px;line-height:20px;font-size:11.5px;color:#d6d6d6;left:1734px;letter-spacing:0.04px;">Keyboard</div>
<svg style="left:1715.5px;top:804px;" width="15" height="15" viewBox="0 0 15 15"><circle cx="7.5" cy="7.5" r="6.3" fill="#f4f4f4" stroke="#9a9a9a" stroke-width="0.8"/><path d="M7.5 3 V7.8 H11.5" stroke="#2a2a2a" stroke-width="1.3" fill="none"/></svg>
<div class="t" style="top:802.00px;height:20px;line-height:20px;font-size:11.5px;color:#d6d6d6;left:1734px;letter-spacing:-1.00px;">LTC</div>
<svg style="left:1715.5px;top:819px;" width="15" height="15" viewBox="0 0 15 15"><rect x="1" y="2" width="13" height="11" fill="#e8e8e8"/><path d="M4.2 2 V8 M7.5 2 V8 M10.8 2 V8" stroke="#1a1a1a" stroke-width="1.8"/><path d="M1 9.5 H14" stroke="#8a8a8a" stroke-width="0.6"/></svg>
<div class="t" style="top:817.00px;height:20px;line-height:20px;font-size:11.5px;color:#d6d6d6;left:1734px;letter-spacing:-0.09px;">MIDI</div>
<div style="left:1732px;top:835px;width:183px;height:14px;background:#6690c4;"></div>
<svg style="left:1715.5px;top:834px;" width="15" height="15" viewBox="0 0 15 15"><rect x="0" y="0" width="15" height="15" fill="#f08a20"/><path d="M2.5 10 Q1.5 7 4.5 5.5 Q6.5 5 7.8 7.5 L9 9.5 M7 8 Q8 5 10.5 5.5 Q13 6.5 12.5 10" stroke="#fff" stroke-width="1.5" fill="none" stroke-linecap="round"/></svg>
<div class="t" style="top:832.00px;height:20px;line-height:20px;font-size:11.5px;color:#f2f5fa;left:1734px;letter-spacing:0.38px;">Motion Studio Plug</div>
<svg style="left:1715.5px;top:849px;" width="15" height="15" viewBox="0 0 15 15"><path d="M3 3 Q7 0 10.5 4 L13.5 10 Q13 14 8.5 13.5 Q4 12 2 7 Z" fill="#e8e8e8"/><path d="M5.5 2.5 L9.5 8" stroke="#5a5a5a" stroke-width="0.9"/></svg>
<div class="t" style="top:847.00px;height:20px;line-height:20px;font-size:11.5px;color:#d6d6d6;left:1734px;letter-spacing:0.37px;">Mouse</div>
<svg style="left:1715.5px;top:864px;" width="15" height="15" viewBox="0 0 15 15"><rect x="8" y="0.5" width="6" height="13.5" fill="#e8e8e8"/><path d="M9.5 3 H12.5 M9.5 5.5 H12.5" stroke="#3a3a3a" stroke-width="1"/><circle cx="11" cy="10" r="1.5" fill="#3a3a3a"/><rect x="0.5" y="8.5" width="5.5" height="5.5" fill="#5a98dc"/><path d="M3.2 8.5 V5 H7.5" stroke="#e8e8e8" stroke-width="1" fill="none"/></svg>
<div class="t" style="top:862.00px;height:20px;line-height:20px;font-size:11.5px;color:#d6d6d6;left:1734px;letter-spacing:0.37px;">Network client</div>
<svg style="left:1715.5px;top:879px;" width="15" height="15" viewBox="0 0 15 15"><rect x="0.5" y="0.5" width="6.5" height="13.5" fill="#e8e8e8"/><path d="M2 3 H5.5 M2 5.5 H5.5" stroke="#3a3a3a" stroke-width="1"/><circle cx="3.8" cy="10" r="1.5" fill="#3a3a3a"/><path d="M8 6 H12 V9.5" stroke="#e8e8e8" stroke-width="1" fill="none"/><rect x="10.8" y="10.5" width="2.6" height="2.6" fill="#5a98dc"/></svg>
<div class="t" style="top:877.00px;height:20px;line-height:20px;font-size:11.5px;color:#d6d6d6;left:1734px;letter-spacing:0.13px;">Network server</div>
<svg style="left:1715.5px;top:894px;" width="15" height="15" viewBox="0 0 15 15"><path d="M7.2 0.5 Q3.8 0.5 3.8 3 V5 H8 V5.8 H2.6 Q0.5 6 0.5 8.5 Q0.5 11 2.6 11 H4 V8.8 Q4 7 6 7 H9.5 Q11 7 11 5.2 V3 Q11 0.5 7.2 0.5 Z" fill="#3a78b8"/><path d="M7.8 14.5 Q11.2 14.5 11.2 12 V10 H7 V9.2 H12.4 Q14.5 9 14.5 6.5 Q14.5 4 12.4 4 H11 V6.2 Q11 8 9 8 H5.5 Q4 8 4 9.8 V12 Q4 14.5 7.8 14.5 Z" fill="#f0d040"/><circle cx="5.6" cy="2.6" r="0.8" fill="#fff"/><circle cx="9.4" cy="12.4" r="0.8" fill="#fff"/></svg>
<div class="t" style="top:892.00px;height:20px;line-height:20px;font-size:11.5px;color:#d6d6d6;left:1734px;letter-spacing:-0.03px;">Script (Embedded Code)</div>
<svg style="left:1715.5px;top:909px;" width="15" height="15" viewBox="0 0 15 15"><path d="M7.2 0.5 Q3.8 0.5 3.8 3 V5 H8 V5.8 H2.6 Q0.5 6 0.5 8.5 Q0.5 11 2.6 11 H4 V8.8 Q4 7 6 7 H9.5 Q11 7 11 5.2 V3 Q11 0.5 7.2 0.5 Z" fill="#3a78b8"/><path d="M7.8 14.5 Q11.2 14.5 11.2 12 V10 H7 V9.2 H12.4 Q14.5 9 14.5 6.5 Q14.5 4 12.4 4 H11 V6.2 Q11 8 9 8 H5.5 Q4 8 4 9.8 V12 Q4 14.5 7.8 14.5 Z" fill="#f0d040"/><circle cx="5.6" cy="2.6" r="0.8" fill="#fff"/><circle cx="9.4" cy="12.4" r="0.8" fill="#fff"/></svg>
<div class="t" style="top:907.00px;height:20px;line-height:20px;font-size:11.5px;color:#d6d6d6;left:1734px;letter-spacing:-0.03px;">Script (External File)</div>
<svg style="left:1715.5px;top:924px;" width="15" height="15" viewBox="0 0 15 15"><path d="M7.2 0.5 Q3.8 0.5 3.8 3 V5 H8 V5.8 H2.6 Q0.5 6 0.5 8.5 Q0.5 11 2.6 11 H4 V8.8 Q4 7 6 7 H9.5 Q11 7 11 5.2 V3 Q11 0.5 7.2 0.5 Z" fill="#3a78b8"/><path d="M7.8 14.5 Q11.2 14.5 11.2 12 V10 H7 V9.2 H12.4 Q14.5 9 14.5 6.5 Q14.5 4 12.4 4 H11 V6.2 Q11 8 9 8 H5.5 Q4 8 4 9.8 V12 Q4 14.5 7.8 14.5 Z" fill="#f0d040"/><circle cx="5.6" cy="2.6" r="0.8" fill="#fff"/><circle cx="9.4" cy="12.4" r="0.8" fill="#fff"/></svg>
<div class="t" style="top:922.00px;height:20px;line-height:20px;font-size:11.5px;color:#d6d6d6;left:1734px;letter-spacing:0.06px;">Script (Internal File)</div>
<svg style="left:1715.5px;top:939px;" width="15" height="15" viewBox="0 0 15 15"><defs><linearGradient id="sd" x1="0" y1="0" x2="1" y2="1"><stop offset="0" stop-color="#f4f4f4"/><stop offset="1" stop-color="#6a6a6a"/></linearGradient></defs><path d="M4.5 0.5 Q11 3 13 11 Q12 15 8.5 13.5 Q3 11 2 5 Q2.5 1.5 4.5 0.5 Z" fill="url(#sd)"/><path d="M4.5 2 Q7 7 9.5 12.5" stroke="#3a3a3a" stroke-width="0.9" fill="none"/></svg>
<div class="t" style="top:937.00px;height:20px;line-height:20px;font-size:11.5px;color:#d6d6d6;left:1734px;letter-spacing:0.18px;">Sound</div>
<svg style="left:1715.5px;top:954px;" width="15" height="15" viewBox="0 0 15 15"><path d="M1 13 L5.5 7.5 L9 9 L14 5.5 M5.5 7.5 L7 13.5 M9 9 L10.5 12.5" stroke="#e8e8e8" stroke-width="1.5" fill="none"/><circle cx="9.8" cy="3" r="2.6" fill="#5a98dc"/><circle cx="9" cy="2.2" r="0.9" fill="#d0e8ff"/></svg>
<div class="t" style="top:952.00px;height:20px;line-height:20px;font-size:11.5px;color:#d6d6d6;left:1734px;letter-spacing:-0.29px;">SpaceBall</div>
<svg style="left:1715.5px;top:969px;" width="15" height="15" viewBox="0 0 15 15"><circle cx="5.8" cy="5.8" r="5" fill="#f4f4f4"/><circle cx="5.8" cy="5.8" r="1.8" fill="#2a2a2a"/><path d="M8.5 6 L8.5 14.5 L10.5 12.8 L11.9 15.6 L13.3 14.9 L12 12.2 L14.5 12 Z" fill="#2a7fb0" stroke="#e8e8e8" stroke-width="0.7"/></svg>
<div class="t" style="top:967.00px;height:20px;line-height:20px;font-size:11.5px;color:#d6d6d6;left:1734px;letter-spacing:-0.17px;">Trigger</div>
<svg style="left:1715.5px;top:984px;" width="15" height="15" viewBox="0 0 15 15"><path d="M0 7.5 H15" stroke="#e8e8e8" stroke-width="1"/><path d="M2.5 5 V10 M4.5 2.5 V12.5 M6.5 1 V14 M8.5 2 V13 M10.5 1 V14 M12.5 3.5 V11.5" stroke="#e8e8e8" stroke-width="1.2"/></svg>
<div class="t" style="top:982.00px;height:20px;line-height:20px;font-size:11.5px;color:#d6d6d6;left:1734px;letter-spacing:0.21px;">Voice</div>
<svg style="left:1715.5px;top:999px;" width="15" height="15" viewBox="0 0 15 15"><rect x="1" y="4.5" width="12" height="9.5" fill="#f4f4f4" stroke="#8a8a8a" stroke-width="0.6"/><path d="M3 11.5 L6 8.5 L8 10.5" stroke="#1a1a1a" stroke-width="1.2" fill="none"/><path d="M6.5 9 L13.5 1.5" stroke="#c89a48" stroke-width="2.4" stroke-linecap="round"/><path d="M5.5 10.3 L7.5 8 L8.3 9 Z" fill="#1a1a1a"/></svg>
<div class="t" style="top:997.00px;height:20px;line-height:20px;font-size:11.5px;color:#d6d6d6;left:1734px;letter-spacing:0.07px;">Wacom Tablet</div>
<svg style="left:0;top:0;pointer-events:none;" width="1920" height="1032" viewBox="0 0 1920 1032"><path d="M1692.0 815.4 L959.2 429.6 L960.9 425.0 L940.9 426.0 L951.6 442.9 L954.4 438.9 L1692.0 815.6 Z" fill="#f8505f"/><path d="M807.9 437.9 L542.3 715.7 L538.3 712.7 L533.9 731.9 L552.7 726.2 L549.5 722.4 L808.1 438.1 Z" fill="#f8505f"/><rect x="1697.3" y="826" width="181.7" height="29.1" rx="3" fill="none" stroke="#f8505f" stroke-width="3.2"/></svg>
</div></body></html>
